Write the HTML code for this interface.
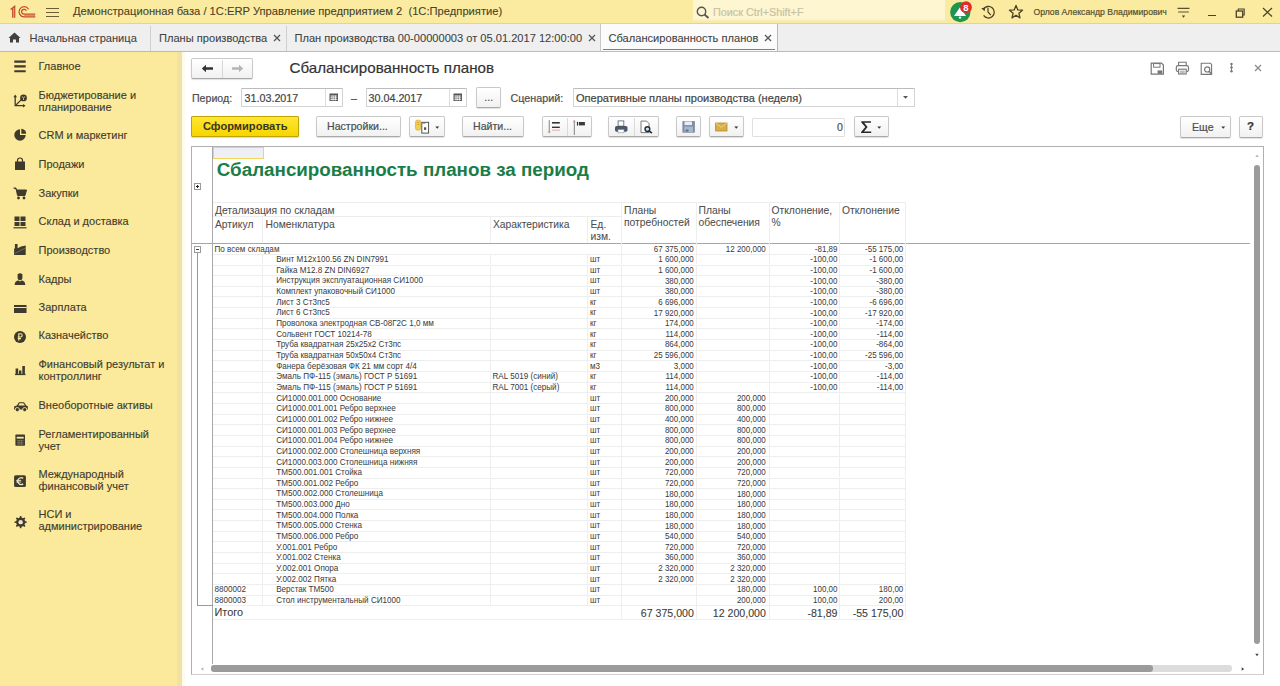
<!DOCTYPE html><html><head><meta charset="utf-8"><style>
html,body{margin:0;padding:0;width:1280px;height:686px;overflow:hidden;background:#fff;font-family:"Liberation Sans", sans-serif;}
.t{position:absolute;white-space:nowrap;-webkit-text-stroke-width:0.2px;}
.b{position:absolute;box-sizing:border-box;}
</style></head><body>
<div class="b" style="left:0.00px;top:0.00px;width:1280.00px;height:23.50px;background:#fbeba0"></div>
<div class="b" style="left:0.00px;top:23.00px;width:1280.00px;height:1.00px;background:#e2d491"></div>
<svg class="b" style="left:9.00px;top:4.00px;" width="28" height="16" viewBox="0 0 28 16">
<g fill="none" stroke="#c44a2a" stroke-width="1.25">
<path d="M1.6 5.6 L5.7 2.4 L5.7 13.7"/>
<path d="M3.7 4.3 L3.7 13.7"/>
<path d="M19.6 5.2 A5.1 5.1 0 1 0 15.2 12.9 L26.3 12.9"/>
<path d="M17.4 6.9 A2.45 2.45 0 1 0 15.2 10.2 L26.3 10.2"/>
</g>
<path d="M15.2 11.5 L26 11.5" stroke="#e8856a" stroke-width="1.1"/>
<path d="M4.7 4 L4.7 13.5" stroke="#e8856a" stroke-width="0.9"/></svg>
<div class="b" style="left:46.00px;top:7.60px;width:12.50px;height:1.20px;background:#6a5e36"></div>
<div class="b" style="left:46.00px;top:11.70px;width:12.50px;height:1.20px;background:#6a5e36"></div>
<div class="b" style="left:46.00px;top:16.00px;width:12.50px;height:1.20px;background:#6a5e36"></div>
<div class="t" style="left:73.00px;top:5.40px;font-size:11.2px;line-height:13.44px;color:#4a4226;font-weight:normal;-webkit-text-stroke-width:0.1px">Демонстрационная база / 1С:ERP Управление предприятием 2  (1С:Предприятие)</div>
<div class="b" style="left:693.00px;top:0.00px;width:252.00px;height:22.00px;background:linear-gradient(#fdf6d0 85%,#f6e8a8)"></div>
<svg class="b" style="left:696.00px;top:6.00px;" width="14" height="13" viewBox="0 0 14 13"><circle cx="5.5" cy="5.5" r="4.2" fill="none" stroke="#555" stroke-width="1.4"/><path d="M8.5 8.5 L12.5 12" stroke="#555" stroke-width="1.8"/></svg>
<div class="t" style="left:713.00px;top:5.78px;font-size:10.8px;line-height:12.96px;color:#c9c2a5;font-weight:normal;">Поиск Ctrl+Shift+F</div>
<svg class="b" style="left:948.00px;top:0.00px;" width="26" height="24" viewBox="0 0 26 24"><circle cx="12.3" cy="12.1" r="10.2" fill="#1e9550"/>
<path d="M6 16.1 L18 16.1 L12 7.2 Z" fill="#fff"/>
<circle cx="12" cy="17.6" r="1.2" fill="#fff"/>
<circle cx="18" cy="7.2" r="5.9" fill="#e32b2b"/>
<text x="18" y="10.5" font-family="Liberation Sans" font-size="9.5" font-weight="bold" fill="#fff" text-anchor="middle">8</text></svg>
<svg class="b" style="left:980.00px;top:4.00px;" width="16" height="16" viewBox="0 0 16 16"><path d="M3.5 5.2 A5.8 5.8 0 1 1 3.6 11.4" fill="none" stroke="#4a4226" stroke-width="1.3"/>
<path d="M1.2 4.2 L5.2 3.6 L4.6 7.2Z" fill="#4a4226"/>
<path d="M8 3.8 L8 8 L10.8 11.2" fill="none" stroke="#4a4226" stroke-width="1.2"/></svg>
<svg class="b" style="left:1008.00px;top:4.00px;" width="16" height="16" viewBox="0 0 16 16"><path d="M8 1.4 L9.8 5.9 L14.5 6.2 L10.9 9.3 L12 13.9 L8 11.3 L4 13.9 L5.1 9.3 L1.5 6.2 L6.2 5.9 Z" fill="none" stroke="#4a4226" stroke-width="1.3" stroke-linejoin="round"/></svg>
<div class="t" style="left:1033.50px;top:7.11px;font-size:8.65px;line-height:10.38px;color:#57502f;font-weight:normal;">Орлов Александр Владимирович</div>
<svg class="b" style="left:1175.00px;top:4.00px;" width="16" height="16" viewBox="0 0 16 16"><path d="M2.5 4.4 H14.5 M3.2 8 H13.8" stroke="#5a5030" stroke-width="1.1"/><path d="M6.8 11.6 L10.2 11.6 L8.5 13.8Z" fill="#4a4226"/></svg>
<div class="b" style="left:1208.00px;top:14.80px;width:7.80px;height:1.20px;background:#4a4226"></div>
<svg class="b" style="left:1234.00px;top:7.00px;" width="12" height="12" viewBox="0 0 12 12"><rect x="2.3" y="4" width="6.4" height="6.2" fill="none" stroke="#4a4226" stroke-width="1.3"/><path d="M4.3 4 V2 H10.2 V8 H8.7" fill="none" stroke="#4a4226" stroke-width="1.1"/></svg>
<svg class="b" style="left:1261.00px;top:6.00px;" width="13" height="13" viewBox="0 0 13 13"><path d="M2 2 L11 10.5 M11 2 L2 10.5" stroke="#4a4226" stroke-width="1.2"/></svg>
<div class="b" style="left:0.00px;top:23.50px;width:1280.00px;height:28.00px;background:#efefef"></div>
<div class="b" style="left:0.00px;top:51.00px;width:1280.00px;height:1.00px;background:#bbbbbb"></div>
<svg class="b" style="left:8.00px;top:32.00px;" width="13" height="11" viewBox="0 0 13 11"><path d="M6.5 0.5 L12.5 6 L11 6 L11 10.5 L8 10.5 L8 7.5 L5 7.5 L5 10.5 L2 10.5 L2 6 L0.5 6 Z" fill="#404040"/></svg>
<div class="t" style="left:29.50px;top:31.79px;font-size:11.1px;line-height:13.32px;color:#404040;font-weight:normal;-webkit-text-stroke-width:0.08px">Начальная страница</div>
<div class="b" style="left:150.00px;top:26.00px;width:1.00px;height:25.00px;background:#cfcfcf"></div>
<div class="t" style="left:159.00px;top:31.79px;font-size:11.1px;line-height:13.32px;color:#404040;font-weight:normal;-webkit-text-stroke-width:0.08px">Планы производства</div>
<svg class="b" style="left:273.00px;top:34.00px;" width="8" height="8" viewBox="0 0 8 8"><path d="M1 1 L7 7 M7 1 L1 7" stroke="#555" stroke-width="1.3"/></svg>
<div class="b" style="left:285.50px;top:26.00px;width:1.00px;height:25.00px;background:#cfcfcf"></div>
<div class="t" style="left:294.50px;top:31.79px;font-size:11.1px;line-height:13.32px;color:#404040;font-weight:normal;-webkit-text-stroke-width:0.08px">План производства 00-00000003 от 05.01.2017 12:00:00</div>
<svg class="b" style="left:588.00px;top:34.00px;" width="8" height="8" viewBox="0 0 8 8"><path d="M1 1 L7 7 M7 1 L1 7" stroke="#555" stroke-width="1.3"/></svg>
<div class="b" style="left:600.00px;top:24.00px;width:178.00px;height:27.00px;background:#fbfbfb;border-left:1px solid #c8c8c8;border-right:1px solid #b8b8b8"></div>
<div class="t" style="left:608.50px;top:31.79px;font-size:11.1px;line-height:13.32px;color:#404040;font-weight:normal;-webkit-text-stroke-width:0.08px">Сбалансированность планов</div>
<svg class="b" style="left:764.00px;top:34.00px;" width="8" height="8" viewBox="0 0 8 8"><path d="M1 1 L7 7 M7 1 L1 7" stroke="#555" stroke-width="1.3"/></svg>
<div class="b" style="left:603.00px;top:48.50px;width:172.00px;height:1.60px;background:#3f9e7c"></div>
<div class="b" style="left:0.00px;top:52.00px;width:181.00px;height:634.00px;background:#fbe99c"></div>
<div class="b" style="left:176.80px;top:52.00px;width:3.20px;height:634.00px;background:#f5e297"></div>
<div class="b" style="left:180.00px;top:52.00px;width:2.00px;height:634.00px;background:#e8e2b8"></div>
<div class="b" style="left:182.00px;top:52.00px;width:3.00px;height:634.00px;background:#fffbe8"></div>
<div class="t" style="left:38.50px;top:60.19px;font-size:11.0px;line-height:13.20px;color:#3f3b2c;font-weight:normal;-webkit-text-stroke-width:0.12px">Главное</div>
<div class="t" style="left:38.50px;top:88.59px;font-size:11.0px;line-height:13.20px;color:#3f3b2c;font-weight:normal;-webkit-text-stroke-width:0.12px">Бюджетирование и</div>
<div class="t" style="left:38.50px;top:100.79px;font-size:11.0px;line-height:13.20px;color:#3f3b2c;font-weight:normal;-webkit-text-stroke-width:0.12px">планирование</div>
<div class="t" style="left:38.50px;top:128.89px;font-size:11.0px;line-height:13.20px;color:#3f3b2c;font-weight:normal;-webkit-text-stroke-width:0.12px">CRM и маркетинг</div>
<div class="t" style="left:38.50px;top:158.09px;font-size:11.0px;line-height:13.20px;color:#3f3b2c;font-weight:normal;-webkit-text-stroke-width:0.12px">Продажи</div>
<div class="t" style="left:38.50px;top:186.69px;font-size:11.0px;line-height:13.20px;color:#3f3b2c;font-weight:normal;-webkit-text-stroke-width:0.12px">Закупки</div>
<div class="t" style="left:38.50px;top:215.49px;font-size:11.0px;line-height:13.20px;color:#3f3b2c;font-weight:normal;-webkit-text-stroke-width:0.12px">Склад и доставка</div>
<div class="t" style="left:38.50px;top:244.09px;font-size:11.0px;line-height:13.20px;color:#3f3b2c;font-weight:normal;-webkit-text-stroke-width:0.12px">Производство</div>
<div class="t" style="left:38.50px;top:272.99px;font-size:11.0px;line-height:13.20px;color:#3f3b2c;font-weight:normal;-webkit-text-stroke-width:0.12px">Кадры</div>
<div class="t" style="left:38.50px;top:300.99px;font-size:11.0px;line-height:13.20px;color:#3f3b2c;font-weight:normal;-webkit-text-stroke-width:0.12px">Зарплата</div>
<div class="t" style="left:38.50px;top:329.39px;font-size:11.0px;line-height:13.20px;color:#3f3b2c;font-weight:normal;-webkit-text-stroke-width:0.12px">Казначейство</div>
<div class="t" style="left:38.50px;top:358.19px;font-size:11.0px;line-height:13.20px;color:#3f3b2c;font-weight:normal;-webkit-text-stroke-width:0.12px">Финансовый результат и</div>
<div class="t" style="left:38.50px;top:370.39px;font-size:11.0px;line-height:13.20px;color:#3f3b2c;font-weight:normal;-webkit-text-stroke-width:0.12px">контроллинг</div>
<div class="t" style="left:38.50px;top:399.19px;font-size:11.0px;line-height:13.20px;color:#3f3b2c;font-weight:normal;-webkit-text-stroke-width:0.12px">Внеоборотные активы</div>
<div class="t" style="left:38.50px;top:427.69px;font-size:11.0px;line-height:13.20px;color:#3f3b2c;font-weight:normal;-webkit-text-stroke-width:0.12px">Регламентированный</div>
<div class="t" style="left:38.50px;top:439.89px;font-size:11.0px;line-height:13.20px;color:#3f3b2c;font-weight:normal;-webkit-text-stroke-width:0.12px">учет</div>
<div class="t" style="left:38.50px;top:468.19px;font-size:11.0px;line-height:13.20px;color:#3f3b2c;font-weight:normal;-webkit-text-stroke-width:0.12px">Международный</div>
<div class="t" style="left:38.50px;top:480.39px;font-size:11.0px;line-height:13.20px;color:#3f3b2c;font-weight:normal;-webkit-text-stroke-width:0.12px">финансовый учет</div>
<div class="t" style="left:38.50px;top:508.19px;font-size:11.0px;line-height:13.20px;color:#3f3b2c;font-weight:normal;-webkit-text-stroke-width:0.12px">НСИ и</div>
<div class="t" style="left:38.50px;top:520.39px;font-size:11.0px;line-height:13.20px;color:#3f3b2c;font-weight:normal;-webkit-text-stroke-width:0.12px">администрирование</div>
<svg class="b" style="left:12.00px;top:58.00px;" width="16" height="16" viewBox="0 0 16 16"><path d="M2.3 3.6 H13.7 M2.3 8.4 H13.7 M2.3 13.2 H13.7" stroke="#3e3a2c" stroke-width="2.1"/></svg>
<svg class="b" style="left:12.00px;top:93.00px;" width="16" height="16" viewBox="0 0 16 16"><path d="M3.2 3 V12.7 H11.5" fill="none" stroke="#3e3a2c" stroke-width="1.3"/><path d="M1.4 4.3 L3.2 1.6 L5 4.3Z" fill="#3e3a2c"/><path d="M11 10.9 L13.6 12.7 L11 14.5Z" fill="#3e3a2c"/><path d="M4 12 L9.3 6.6" stroke="#3e3a2c" stroke-width="1.2"/><circle cx="11.5" cy="4.9" r="3.4" fill="#3e3a2c"/><path d="M10.2 3.3 L11.5 5.5 L12.8 3.3 M11.5 5.5 V7" fill="none" stroke="#fbe99c" stroke-width="0.7"/></svg>
<svg class="b" style="left:13.00px;top:128.20px;" width="14" height="14" viewBox="0 0 14 14"><path d="M7 1.3 A5.7 5.7 0 1 0 12.7 7 L7 7 Z" fill="#3e3a2c"/><path d="M8.3 0.8 A5 5 0 0 1 13.2 5.7 L8.3 5.7Z" fill="#3e3a2c"/></svg>
<svg class="b" style="left:13.00px;top:157.40px;" width="14" height="14" viewBox="0 0 14 14"><path d="M2 4.5 H12 V13 H2Z" fill="#3e3a2c"/><path d="M4.5 6 V3.5 A2.5 2.5 0 0 1 9.5 3.5 V6" fill="none" stroke="#3e3a2c" stroke-width="1.2"/></svg>
<svg class="b" style="left:13.00px;top:186.00px;" width="14" height="14" viewBox="0 0 14 14"><path d="M0.5 2 H3 L4.5 9.5 H12 L13.5 4 H3.5" fill="#3e3a2c" stroke="#3e3a2c" stroke-width="1"/><circle cx="5.5" cy="12" r="1.4" fill="#3e3a2c"/><circle cx="11" cy="12" r="1.4" fill="#3e3a2c"/></svg>
<svg class="b" style="left:13.00px;top:214.80px;" width="14" height="14" viewBox="0 0 14 14"><path d="M1.5 1.5 H6.5 V6 H1.5Z M7.5 1.5 H12.5 V6 H7.5Z M1.5 7 H6.5 V11 H1.5Z M7.5 7 H12.5 V11 H7.5Z" fill="#3e3a2c"/><path d="M0.5 12.8 H13.5" stroke="#3e3a2c" stroke-width="1.2"/></svg>
<svg class="b" style="left:13.00px;top:243.40px;" width="14" height="14" viewBox="0 0 14 14"><path d="M1.1 12.1 V5.6 H1.9 V0.9 H4.6 V5.2 L8 3.6 L12.7 2.4 V12.1Z" fill="#3e3a2c"/><path d="M2 10.5 L12 5.2" stroke="#7d7760" stroke-width="0.8"/></svg>
<svg class="b" style="left:13.00px;top:272.30px;" width="14" height="14" viewBox="0 0 14 14"><path d="M4.6 2.2 Q7 0.3 9.4 2.2 V5.6 A2.4 2.6 0 0 1 4.6 5.6Z" fill="#3e3a2c"/><path d="M1.7 13 C1.7 9.6 3.6 8.6 5.4 8.4 L7 9.6 L8.6 8.4 C10.4 8.6 12.3 9.6 12.3 13Z" fill="#3e3a2c"/></svg>
<svg class="b" style="left:13.00px;top:301.80px;" width="14" height="14" viewBox="0 0 14 14"><rect x="1" y="3" width="12.5" height="8" fill="#3e3a2c"/><path d="M1 5.5 H13.5" stroke="#fbe99c" stroke-width="1"/></svg>
<svg class="b" style="left:13.00px;top:330.20px;" width="14" height="14" viewBox="0 0 14 14"><circle cx="7" cy="7" r="6" fill="#3e3a2c"/><path d="M5.8 10.5 V3.8 H7.6 A1.6 1.6 0 0 1 7.6 7 H4.8 M4.8 8.6 H8" fill="none" stroke="#fbe99c" stroke-width="1.1"/></svg>
<svg class="b" style="left:13.00px;top:361.50px;" width="14" height="14" viewBox="0 0 14 14"><path d="M2 12.5 H12.5" stroke="#3e3a2c" stroke-width="1.2"/><rect x="2.6" y="6.5" width="2.6" height="6" fill="#3e3a2c"/><rect x="6" y="8.5" width="2.4" height="4" fill="#3e3a2c"/><rect x="9.3" y="4" width="2.6" height="8.5" fill="#3e3a2c"/></svg>
<svg class="b" style="left:13.00px;top:399.00px;" width="16" height="14" viewBox="0 0 16 14"><path d="M1 10.5 L1.3 7.3 L3.8 6.6 L6 3.2 L11 3.2 L13.2 6.6 L14.8 7.3 L14.8 10.5Z" fill="#3e3a2c"/><path d="M6.6 4.3 L10.4 4.3 L11.9 6.5 L5.3 6.5Z" fill="#fbe99c"/><circle cx="4.3" cy="10.6" r="2.1" fill="#3e3a2c" stroke="#fbe99c" stroke-width="0.9"/><circle cx="11.7" cy="10.6" r="2.1" fill="#3e3a2c" stroke="#fbe99c" stroke-width="0.9"/></svg>
<svg class="b" style="left:13.00px;top:432.00px;" width="16" height="16" viewBox="0 0 16 16"><rect x="2.4" y="2.4" width="9.6" height="11.3" rx="0.8" fill="#3e3a2c"/><rect x="3.7" y="4.8" width="7" height="1.8" fill="#fbe99c"/><path d="M4 8.6 H10.6 M4 10.3 H10.6 M4 12 H10.6" stroke="#8a8570" stroke-width="0.6"/><path d="M6 8 V13 M8.5 8 V13" stroke="#8a8570" stroke-width="0.6"/></svg>
<svg class="b" style="left:13.00px;top:474.00px;" width="16" height="16" viewBox="0 0 16 16"><rect x="1.1" y="1.3" width="11.8" height="11.7" rx="1.5" fill="#3e3a2c"/><path d="M10.2 4.4 A3.4 3.4 0 1 0 10.2 9.9" fill="none" stroke="#ede6c8" stroke-width="1.3"/><path d="M3.2 6.4 H8.2 M3.2 8 H8.2" stroke="#ede6c8" stroke-width="0.9"/></svg>
<svg class="b" style="left:13.00px;top:513.50px;" width="15" height="16" viewBox="0 0 15 16"><path d="M7 2 L8.3 2 L8.6 3.6 L10.1 4.3 L11.5 3.4 L12.4 4.3 L11.5 5.7 L12.2 7.2 L13.8 7.5 L13.8 8.8 L12.2 9.1 L11.5 10.6 L12.4 12 L11.5 12.9 L10.1 12 L8.6 12.7 L8.3 14.3 L7 14.3 L6.7 12.7 L5.2 12 L3.8 12.9 L2.9 12 L3.8 10.6 L3.1 9.1 L1.5 8.8 L1.5 7.5 L3.1 7.2 L3.8 5.7 L2.9 4.3 L3.8 3.4 L5.2 4.3 L6.7 3.6Z" fill="#3e3a2c"/><circle cx="7.65" cy="8.15" r="2.2" fill="#ede6c8"/></svg>
<div class="b" style="left:191.00px;top:57.80px;width:61.50px;height:20.80px;background:linear-gradient(#ffffff,#f1f1f1);border:1px solid #c9c9c9;border-bottom-color:#a9a9a9;border-radius:2px;box-shadow:0 1px 1px rgba(0,0,0,0.12)"></div>
<div class="b" style="left:222.00px;top:59.50px;width:1.00px;height:18.00px;background:#d8d8d8"></div>
<svg class="b" style="left:201.00px;top:64.00px;" width="13" height="9" viewBox="0 0 13 9"><path d="M0.8 4.5 L5 0.8 L5 3.3 L12 3.3 L12 5.7 L5 5.7 L5 8.2Z" fill="#333"/></svg>
<svg class="b" style="left:231.00px;top:64.00px;" width="13" height="9" viewBox="0 0 13 9"><path d="M12.2 4.5 L8 0.8 L8 3.3 L1 3.3 L1 5.7 L8 5.7 L8 8.2Z" fill="#b5b5b5"/></svg>
<div class="t" style="left:289.50px;top:59.46px;font-size:15.15px;line-height:18.18px;color:#333;font-weight:normal;">Сбалансированность планов</div>
<svg class="b" style="left:1150.00px;top:62.00px;" width="15" height="14" viewBox="0 0 15 14"><path d="M1.2 1.2 H11.5 L13.4 3.1 V12.2 H1.2Z" fill="none" stroke="#777" stroke-width="1.2"/><rect x="3.6" y="1.6" width="6.4" height="3.6" fill="none" stroke="#777" stroke-width="1"/><rect x="7.6" y="8.4" width="4.6" height="3.4" fill="#777"/></svg>
<svg class="b" style="left:1175.00px;top:61.00px;" width="15" height="15" viewBox="0 0 15 15"><rect x="1.3" y="4.6" width="12.2" height="6" rx="1.8" fill="none" stroke="#777" stroke-width="1.2"/><path d="M3.6 4.6 V1.3 H11.2 V4.6" fill="none" stroke="#777" stroke-width="1.1"/><rect x="3.6" y="8.2" width="7.6" height="4.8" fill="#fff" stroke="#777" stroke-width="1.1"/><path d="M5 10.2 H9.8 M5 11.8 H9.8" stroke="#777" stroke-width="0.7"/></svg>
<svg class="b" style="left:1200.00px;top:61.50px;" width="14" height="14" viewBox="0 0 14 14"><path d="M1.2 1.2 H10.4 L11.6 2.4 V12.4 H1.2Z" fill="none" stroke="#777" stroke-width="1.1"/><circle cx="7.2" cy="7.4" r="2.6" fill="none" stroke="#777" stroke-width="1.2"/><path d="M9 9.3 L11.8 12.3" stroke="#777" stroke-width="1.5"/></svg>
<svg class="b" style="left:1229.00px;top:62.00px;" width="5" height="11" viewBox="0 0 5 11"><path d="M2.5 1.5 V9.6" stroke="#777" stroke-width="0.9"/><circle cx="2.5" cy="1.9" r="1.2" fill="#777"/><circle cx="2.5" cy="5.5" r="1.2" fill="#777"/><circle cx="2.5" cy="9.2" r="1.2" fill="#777"/></svg>
<svg class="b" style="left:1253.50px;top:63.50px;" width="8" height="8" viewBox="0 0 8 8"><path d="M1 1 L7 7 M7 1 L1 7" stroke="#888" stroke-width="1.2"/></svg>
<div class="t" style="left:192.00px;top:91.97px;font-size:10.6px;line-height:12.72px;color:#4d4d4d;font-weight:normal;">Период:</div>
<div class="b" style="left:241.25px;top:88.30px;width:101.50px;height:18.50px;background:#fff;border:1px solid #d2d2d2;border-top-color:#bcbcbc;border-radius:1px"></div>
<div class="b" style="left:325.00px;top:89.30px;width:1.00px;height:16.50px;background:#dcdcdc"></div>
<div class="t" style="left:244.50px;top:91.83px;font-size:10.75px;line-height:12.90px;color:#444;font-weight:normal;">31.03.2017</div>
<svg class="b" style="left:328.50px;top:93.00px;" width="10" height="9" viewBox="0 0 10 9"><rect x="0.5" y="0.5" width="8.5" height="7.5" fill="#555"/><path d="M1.3 3 H8.2 M1.3 4.8 H8.2 M1.3 6.5 H8.2 M3 2.5 V7.5 M4.75 2.5 V7.5 M6.5 2.5 V7.5" stroke="#fff" stroke-width="0.7"/></svg>
<div class="t" style="left:351.00px;top:91.97px;font-size:10.6px;line-height:12.72px;color:#4d4d4d;font-weight:normal;">–</div>
<div class="b" style="left:366.40px;top:88.30px;width:100.30px;height:18.50px;background:#fff;border:1px solid #d2d2d2;border-top-color:#bcbcbc;border-radius:1px"></div>
<div class="b" style="left:449.40px;top:89.30px;width:1.00px;height:16.50px;background:#dcdcdc"></div>
<div class="t" style="left:368.50px;top:91.83px;font-size:10.75px;line-height:12.90px;color:#444;font-weight:normal;">30.04.2017</div>
<svg class="b" style="left:452.50px;top:93.00px;" width="10" height="9" viewBox="0 0 10 9"><rect x="0.5" y="0.5" width="8.5" height="7.5" fill="#555"/><path d="M1.3 3 H8.2 M1.3 4.8 H8.2 M1.3 6.5 H8.2 M3 2.5 V7.5 M4.75 2.5 V7.5 M6.5 2.5 V7.5" stroke="#fff" stroke-width="0.7"/></svg>
<div class="b" style="left:476.40px;top:86.50px;width:24.60px;height:21.00px;background:linear-gradient(#ffffff,#f1f1f1);border:1px solid #c9c9c9;border-bottom-color:#a9a9a9;border-radius:2px;box-shadow:0 1px 1px rgba(0,0,0,0.12)"></div>
<div class="t" style="left:484.30px;top:91.27px;font-size:10.6px;line-height:12.72px;color:#555;font-weight:normal;">...</div>
<div class="t" style="left:510.50px;top:91.83px;font-size:10.75px;line-height:12.90px;color:#4d4d4d;font-weight:normal;">Сценарий:</div>
<div class="b" style="left:573.10px;top:88.30px;width:341.80px;height:18.50px;background:#fff;border:1px solid #d2d2d2;border-top-color:#bcbcbc;border-radius:1px"></div>
<div class="b" style="left:896.50px;top:89.30px;width:1.00px;height:16.50px;background:#dcdcdc"></div>
<div class="t" style="left:576.00px;top:91.54px;font-size:11.05px;line-height:13.26px;color:#444;font-weight:normal;">Оперативные планы производства (неделя)</div>
<svg class="b" style="left:902.00px;top:95.00px;" width="7" height="5" viewBox="0 0 7 5"><path d="M1 1 L6 1 L3.5 3.8Z" fill="#555"/></svg>
<div class="b" style="left:191.25px;top:116.40px;width:107.50px;height:20.70px;background:linear-gradient(#ffe733,#f6d500);border:1px solid #bfa300;border-radius:1px;box-shadow:0 1px 1px rgba(0,0,0,0.15)"></div>
<div class="t" style="left:203.00px;top:119.99px;font-size:11.1px;line-height:13.32px;color:#3a3520;font-weight:bold;-webkit-text-stroke-width:0">Сформировать</div>
<div class="b" style="left:316.00px;top:116.10px;width:85.20px;height:21.20px;background:linear-gradient(#ffffff,#f1f1f1);border:1px solid #c9c9c9;border-bottom-color:#a9a9a9;border-radius:2px;box-shadow:0 1px 1px rgba(0,0,0,0.12)"></div>
<div class="t" style="left:327.00px;top:120.47px;font-size:10.6px;line-height:12.72px;color:#4d4d4d;font-weight:normal;">Настройки...</div>
<div class="b" style="left:409.30px;top:116.10px;width:35.50px;height:21.20px;background:linear-gradient(#ffffff,#f1f1f1);border:1px solid #c9c9c9;border-bottom-color:#a9a9a9;border-radius:2px;box-shadow:0 1px 1px rgba(0,0,0,0.12)"></div>
<svg class="b" style="left:413.00px;top:118.00px;" width="20" height="18" viewBox="0 0 20 18"><rect x="2.6" y="2.2" width="5" height="9.8" rx="1.5" fill="#f0cf55" stroke="#dcb032" stroke-width="0.8"/><path d="M4 4.5 H6.2 M4 6.5 H6.2" stroke="#c99a20" stroke-width="0.7"/><rect x="8.8" y="4.3" width="6.8" height="10.8" fill="#fff" stroke="#444" stroke-width="0.9"/><path d="M9.3 5.5 H12.5" stroke="#888" stroke-width="0.7"/><rect x="11" y="9.3" width="2.2" height="2.6" fill="#555"/></svg>
<svg class="b" style="left:434.50px;top:125.50px;" width="5" height="4" viewBox="0 0 5 4"><path d="M0.3 0.5 L4.2 0.5 L2.25 2.8Z" fill="#333"/></svg>
<div class="b" style="left:461.70px;top:116.10px;width:62.20px;height:21.20px;background:linear-gradient(#ffffff,#f1f1f1);border:1px solid #c9c9c9;border-bottom-color:#a9a9a9;border-radius:2px;box-shadow:0 1px 1px rgba(0,0,0,0.12)"></div>
<div class="t" style="left:473.00px;top:120.47px;font-size:10.6px;line-height:12.72px;color:#4d4d4d;font-weight:normal;">Найти...</div>
<div class="b" style="left:541.50px;top:116.10px;width:50.00px;height:21.20px;background:linear-gradient(#ffffff,#f1f1f1);border:1px solid #c9c9c9;border-bottom-color:#a9a9a9;border-radius:2px;box-shadow:0 1px 1px rgba(0,0,0,0.12)"></div>
<div class="b" style="left:567.30px;top:117.50px;width:1.00px;height:18.50px;background:#dadada"></div>
<svg class="b" style="left:546.00px;top:118.00px;" width="20" height="18" viewBox="0 0 20 18"><path d="M3.25 2.2 V15" stroke="#777" stroke-width="0.9"/><path d="M2 13 L3.25 15.2 L4.5 13" fill="none" stroke="#d99" stroke-width="0.7"/><rect x="6" y="4" width="7.8" height="1.6" fill="#333"/><rect x="6" y="8.6" width="7.8" height="1.4" fill="#333"/><rect x="6" y="11.7" width="7.8" height="0.9" fill="#e6a0a0"/></svg>
<svg class="b" style="left:571.00px;top:118.00px;" width="20" height="18" viewBox="0 0 20 18"><path d="M3.3 2.2 V17" stroke="#777" stroke-width="0.9"/><path d="M2 4.4 L3.3 2.2 L4.6 4.4" fill="none" stroke="#d99" stroke-width="0.7"/><rect x="5.9" y="3.8" width="1.2" height="3.8" fill="#333"/><rect x="7.9" y="4" width="6" height="3.4" fill="#3a3a3a"/></svg>
<div class="b" style="left:608.40px;top:116.10px;width:50.60px;height:21.20px;background:linear-gradient(#ffffff,#f1f1f1);border:1px solid #c9c9c9;border-bottom-color:#a9a9a9;border-radius:2px;box-shadow:0 1px 1px rgba(0,0,0,0.12)"></div>
<div class="b" style="left:634.30px;top:117.50px;width:1.00px;height:18.50px;background:#dadada"></div>
<svg class="b" style="left:613.00px;top:118.00px;" width="16" height="18" viewBox="0 0 16 18"><rect x="5.1" y="2.9" width="5.7" height="5.2" fill="#fff" stroke="#5f6f88" stroke-width="0.9"/><rect x="2" y="8" width="12.5" height="5.7" rx="1.6" fill="#4b5668"/><rect x="5" y="11.6" width="6" height="3.2" fill="#fff" stroke="#8a93a0" stroke-width="0.6"/></svg>
<svg class="b" style="left:639.00px;top:118.00px;" width="16" height="18" viewBox="0 0 16 18"><path d="M2 3.1 H7.6 L10 5.5 V14.6 H2Z" fill="#fff" stroke="#6a6a6a" stroke-width="0.9"/><circle cx="8.4" cy="11.1" r="2.4" fill="#cfe0ef" stroke="#1f2a3a" stroke-width="1.4"/><path d="M10.1 12.8 L12.9 15.1" stroke="#1f2a3a" stroke-width="1.7"/></svg>
<div class="b" style="left:676.30px;top:116.10px;width:24.70px;height:21.20px;background:linear-gradient(#ffffff,#f1f1f1);border:1px solid #c9c9c9;border-bottom-color:#a9a9a9;border-radius:2px;box-shadow:0 1px 1px rgba(0,0,0,0.12)"></div>
<svg class="b" style="left:681.00px;top:118.00px;" width="16" height="16" viewBox="0 0 16 16"><rect x="1.4" y="2.9" width="12.5" height="11.9" rx="0.8" fill="#7d8ea4"/><rect x="3.5" y="3.5" width="7.5" height="3.6" fill="#e6edf4"/><rect x="3.3" y="8.6" width="8.6" height="5.6" fill="#a9b8c9"/><rect x="4.5" y="11.6" width="3" height="2" fill="#5d6d82"/></svg>
<div class="b" style="left:709.10px;top:116.10px;width:34.80px;height:21.20px;background:linear-gradient(#ffffff,#f1f1f1);border:1px solid #c9c9c9;border-bottom-color:#a9a9a9;border-radius:2px;box-shadow:0 1px 1px rgba(0,0,0,0.12)"></div>
<svg class="b" style="left:713.00px;top:120.00px;" width="16" height="14" viewBox="0 0 16 14"><rect x="2.6" y="3" width="11.4" height="8" fill="#d8ae48" stroke="#b88a2a" stroke-width="0.8"/><path d="M2.8 3.2 L8.3 7.3 L13.8 3.2" fill="none" stroke="#f4d98a" stroke-width="0.9"/></svg>
<svg class="b" style="left:733.50px;top:125.50px;" width="5" height="4" viewBox="0 0 5 4"><path d="M0.3 0.5 L4.2 0.5 L2.25 2.8Z" fill="#333"/></svg>
<div class="b" style="left:752.30px;top:117.50px;width:92.40px;height:19.00px;background:#fff;border:1px solid #e0e0e0;border-radius:1px"></div>
<div class="t" style="right:437.00px;top:120.97px;font-size:10.6px;line-height:12.72px;color:#4d4d4d;font-weight:normal;text-align:right;">0</div>
<div class="b" style="left:854.40px;top:116.10px;width:34.20px;height:21.20px;background:linear-gradient(#ffffff,#f1f1f1);border:1px solid #c9c9c9;border-bottom-color:#a9a9a9;border-radius:2px;box-shadow:0 1px 1px rgba(0,0,0,0.12)"></div>
<svg class="b" style="left:859.00px;top:119.00px;" width="14" height="16" viewBox="0 0 14 16"><path d="M2.3 2.2 H12 V3.8 H5.2 L8.6 8.1 L5 12.4 H12.2 V14.1 H2.1 V12.9 L6.3 8.1 L2.3 3.4Z" fill="#2a2a2a"/></svg>
<svg class="b" style="left:877.00px;top:125.50px;" width="5" height="4" viewBox="0 0 5 4"><path d="M0.3 0.5 L4.2 0.5 L2.25 2.8Z" fill="#333"/></svg>
<div class="b" style="left:1180.40px;top:116.00px;width:50.30px;height:21.60px;background:linear-gradient(#ffffff,#f1f1f1);border:1px solid #c9c9c9;border-bottom-color:#a9a9a9;border-radius:2px;box-shadow:0 1px 1px rgba(0,0,0,0.12)"></div>
<div class="t" style="left:1192.00px;top:120.97px;font-size:10.6px;line-height:12.72px;color:#4d4d4d;font-weight:normal;">Еще</div>
<svg class="b" style="left:1220.50px;top:125.50px;" width="5" height="4" viewBox="0 0 5 4"><path d="M0.3 0.5 L4.2 0.5 L2.25 2.8Z" fill="#333"/></svg>
<div class="b" style="left:1238.60px;top:116.00px;width:24.70px;height:21.60px;background:linear-gradient(#ffffff,#f1f1f1);border:1px solid #c9c9c9;border-bottom-color:#a9a9a9;border-radius:2px;box-shadow:0 1px 1px rgba(0,0,0,0.12)"></div>
<div class="t" style="left:1247.00px;top:120.12px;font-size:11.5px;line-height:13.80px;color:#333;font-weight:bold;">?</div>
<div class="b" style="left:191.00px;top:146.00px;width:1073.00px;height:529.00px;border:1px solid #b0b0b0;border-bottom-color:#cfcfcf;background:#fff"></div>
<div class="b" style="left:212.30px;top:146.00px;width:1.00px;height:517.50px;background:#a8a8a8"></div>
<div class="b" style="left:212.50px;top:146.50px;width:51.80px;height:12.50px;border:1.7px solid #f2d65c;background:#eef0f5"></div>
<div class="b" style="left:194.00px;top:183.00px;width:7.00px;height:7.00px;border:1px solid #9a9a9a;background:#fff"></div>
<div class="b" style="left:196.00px;top:186.00px;width:3.00px;height:1.00px;background:#222"></div>
<div class="b" style="left:197.00px;top:185.00px;width:1.00px;height:3.00px;background:#222"></div>
<div class="t" style="left:216.80px;top:158.81px;font-size:18.8px;line-height:22.56px;color:#1a7d48;font-weight:bold;-webkit-text-stroke-width:0">Сбалансированность планов за период</div>
<div class="b" style="left:212.50px;top:202.00px;width:692.30px;height:1.00px;background:#ededed"></div>
<div class="b" style="left:212.50px;top:216.40px;width:408.30px;height:1.00px;background:#ededed"></div>
<div class="b" style="left:262.00px;top:216.40px;width:1.00px;height:27.10px;background:#eeeeee"></div>
<div class="b" style="left:490.00px;top:216.40px;width:1.00px;height:27.10px;background:#eeeeee"></div>
<div class="b" style="left:587.00px;top:216.40px;width:1.00px;height:27.10px;background:#eeeeee"></div>
<div class="b" style="left:620.50px;top:202.00px;width:1.00px;height:41.50px;background:#eeeeee"></div>
<div class="b" style="left:695.50px;top:202.00px;width:1.00px;height:41.50px;background:#eeeeee"></div>
<div class="b" style="left:768.50px;top:202.00px;width:1.00px;height:41.50px;background:#eeeeee"></div>
<div class="b" style="left:839.00px;top:202.00px;width:1.00px;height:41.50px;background:#eeeeee"></div>
<div class="b" style="left:904.50px;top:202.00px;width:1.00px;height:41.50px;background:#eeeeee"></div>
<div class="t" style="left:215.00px;top:204.65px;font-size:10.3px;line-height:12.36px;color:#4d4d4d;font-weight:normal;-webkit-text-stroke-width:0.05px">Детализация по складам</div>
<div class="t" style="left:215.00px;top:218.55px;font-size:10.3px;line-height:12.36px;color:#4d4d4d;font-weight:normal;-webkit-text-stroke-width:0.05px">Артикул</div>
<div class="t" style="left:265.50px;top:218.55px;font-size:10.3px;line-height:12.36px;color:#4d4d4d;font-weight:normal;-webkit-text-stroke-width:0.05px">Номенклатура</div>
<div class="t" style="left:493.00px;top:218.55px;font-size:10.3px;line-height:12.36px;color:#4d4d4d;font-weight:normal;-webkit-text-stroke-width:0.05px">Характеристика</div>
<div class="t" style="left:590.50px;top:218.95px;font-size:10.3px;line-height:12.36px;color:#4d4d4d;font-weight:normal;-webkit-text-stroke-width:0.05px">Ед.</div>
<div class="t" style="left:590.50px;top:230.85px;font-size:10.3px;line-height:12.36px;color:#4d4d4d;font-weight:normal;-webkit-text-stroke-width:0.05px">изм.</div>
<div class="t" style="left:624.00px;top:204.85px;font-size:10.3px;line-height:12.36px;color:#4d4d4d;font-weight:normal;-webkit-text-stroke-width:0.05px">Планы</div>
<div class="t" style="left:624.00px;top:216.75px;font-size:10.3px;line-height:12.36px;color:#4d4d4d;font-weight:normal;-webkit-text-stroke-width:0.05px">потребностей</div>
<div class="t" style="left:698.50px;top:204.85px;font-size:10.3px;line-height:12.36px;color:#4d4d4d;font-weight:normal;-webkit-text-stroke-width:0.05px">Планы</div>
<div class="t" style="left:698.50px;top:216.75px;font-size:10.3px;line-height:12.36px;color:#4d4d4d;font-weight:normal;-webkit-text-stroke-width:0.05px">обеспечения</div>
<div class="t" style="left:771.50px;top:204.85px;font-size:10.3px;line-height:12.36px;color:#4d4d4d;font-weight:normal;-webkit-text-stroke-width:0.05px">Отклонение,</div>
<div class="t" style="left:771.50px;top:216.75px;font-size:10.3px;line-height:12.36px;color:#4d4d4d;font-weight:normal;-webkit-text-stroke-width:0.05px">%</div>
<div class="t" style="left:842.00px;top:204.85px;font-size:10.3px;line-height:12.36px;color:#4d4d4d;font-weight:normal;-webkit-text-stroke-width:0.05px">Отклонение</div>
<div class="b" style="left:191.00px;top:243.00px;width:1059.00px;height:1.00px;background:#a6a6a6"></div>
<div class="b" style="left:212.50px;top:253.85px;width:692.30px;height:1.00px;background:#eeeeee"></div>
<div class="b" style="left:620.50px;top:243.20px;width:1.00px;height:10.65px;background:#eeeeee"></div>
<div class="b" style="left:695.50px;top:243.20px;width:1.00px;height:10.65px;background:#eeeeee"></div>
<div class="b" style="left:768.50px;top:243.20px;width:1.00px;height:10.65px;background:#eeeeee"></div>
<div class="b" style="left:839.00px;top:243.20px;width:1.00px;height:10.65px;background:#eeeeee"></div>
<div class="b" style="left:904.50px;top:243.20px;width:1.00px;height:10.65px;background:#eeeeee"></div>
<div class="t" style="left:214.50px;top:244.51px;font-size:8.12px;line-height:9.74px;color:#3a3a3a;font-weight:normal;-webkit-text-stroke-width:0;transform:scaleY(1.1);transform-origin:0 80%">По всем складам</div>
<div class="t" style="right:586.20px;top:244.63px;font-size:8px;line-height:9.60px;color:#3a3a3a;font-weight:normal;text-align:right;-webkit-text-stroke-width:0;transform:scaleY(1.1);transform-origin:100% 80%">67 375,000</div>
<div class="t" style="right:514.20px;top:244.63px;font-size:8px;line-height:9.60px;color:#3a3a3a;font-weight:normal;text-align:right;-webkit-text-stroke-width:0;transform:scaleY(1.1);transform-origin:100% 80%">12 200,000</div>
<div class="t" style="right:442.50px;top:244.63px;font-size:8px;line-height:9.60px;color:#3a3a3a;font-weight:normal;text-align:right;-webkit-text-stroke-width:0;transform:scaleY(1.1);transform-origin:100% 80%">-81,89</div>
<div class="t" style="right:376.70px;top:244.63px;font-size:8px;line-height:9.60px;color:#3a3a3a;font-weight:normal;text-align:right;-webkit-text-stroke-width:0;transform:scaleY(1.1);transform-origin:100% 80%">-55 175,00</div>
<div class="b" style="left:212.50px;top:264.50px;width:692.30px;height:1.00px;background:#eeeeee"></div>
<div class="b" style="left:262.00px;top:253.85px;width:1.00px;height:10.65px;background:#eeeeee"></div>
<div class="b" style="left:490.00px;top:253.85px;width:1.00px;height:10.65px;background:#eeeeee"></div>
<div class="b" style="left:587.00px;top:253.85px;width:1.00px;height:10.65px;background:#eeeeee"></div>
<div class="b" style="left:620.50px;top:253.85px;width:1.00px;height:10.65px;background:#eeeeee"></div>
<div class="b" style="left:695.50px;top:253.85px;width:1.00px;height:10.65px;background:#eeeeee"></div>
<div class="b" style="left:768.50px;top:253.85px;width:1.00px;height:10.65px;background:#eeeeee"></div>
<div class="b" style="left:839.00px;top:253.85px;width:1.00px;height:10.65px;background:#eeeeee"></div>
<div class="b" style="left:904.50px;top:253.85px;width:1.00px;height:10.65px;background:#eeeeee"></div>
<div class="t" style="left:276.20px;top:255.16px;font-size:8.12px;line-height:9.74px;color:#3a3a3a;font-weight:normal;-webkit-text-stroke-width:0;transform:scaleY(1.1);transform-origin:0 80%">Винт М12х100.56 ZN DIN7991</div>
<div class="t" style="left:590.00px;top:255.16px;font-size:8.12px;line-height:9.74px;color:#3a3a3a;font-weight:normal;-webkit-text-stroke-width:0;transform:scaleY(1.1);transform-origin:0 80%">шт</div>
<div class="t" style="right:586.20px;top:255.28px;font-size:8px;line-height:9.60px;color:#3a3a3a;font-weight:normal;text-align:right;-webkit-text-stroke-width:0;transform:scaleY(1.1);transform-origin:100% 80%">1 600,000</div>
<div class="t" style="right:442.50px;top:255.28px;font-size:8px;line-height:9.60px;color:#3a3a3a;font-weight:normal;text-align:right;-webkit-text-stroke-width:0;transform:scaleY(1.1);transform-origin:100% 80%">-100,00</div>
<div class="t" style="right:376.70px;top:255.28px;font-size:8px;line-height:9.60px;color:#3a3a3a;font-weight:normal;text-align:right;-webkit-text-stroke-width:0;transform:scaleY(1.1);transform-origin:100% 80%">-1 600,00</div>
<div class="b" style="left:212.50px;top:275.15px;width:692.30px;height:1.00px;background:#eeeeee"></div>
<div class="b" style="left:262.00px;top:264.50px;width:1.00px;height:10.65px;background:#eeeeee"></div>
<div class="b" style="left:490.00px;top:264.50px;width:1.00px;height:10.65px;background:#eeeeee"></div>
<div class="b" style="left:587.00px;top:264.50px;width:1.00px;height:10.65px;background:#eeeeee"></div>
<div class="b" style="left:620.50px;top:264.50px;width:1.00px;height:10.65px;background:#eeeeee"></div>
<div class="b" style="left:695.50px;top:264.50px;width:1.00px;height:10.65px;background:#eeeeee"></div>
<div class="b" style="left:768.50px;top:264.50px;width:1.00px;height:10.65px;background:#eeeeee"></div>
<div class="b" style="left:839.00px;top:264.50px;width:1.00px;height:10.65px;background:#eeeeee"></div>
<div class="b" style="left:904.50px;top:264.50px;width:1.00px;height:10.65px;background:#eeeeee"></div>
<div class="t" style="left:276.20px;top:265.81px;font-size:8.12px;line-height:9.74px;color:#3a3a3a;font-weight:normal;-webkit-text-stroke-width:0;transform:scaleY(1.1);transform-origin:0 80%">Гайка М12.8 ZN DIN6927</div>
<div class="t" style="left:590.00px;top:265.81px;font-size:8.12px;line-height:9.74px;color:#3a3a3a;font-weight:normal;-webkit-text-stroke-width:0;transform:scaleY(1.1);transform-origin:0 80%">шт</div>
<div class="t" style="right:586.20px;top:265.93px;font-size:8px;line-height:9.60px;color:#3a3a3a;font-weight:normal;text-align:right;-webkit-text-stroke-width:0;transform:scaleY(1.1);transform-origin:100% 80%">1 600,000</div>
<div class="t" style="right:442.50px;top:265.93px;font-size:8px;line-height:9.60px;color:#3a3a3a;font-weight:normal;text-align:right;-webkit-text-stroke-width:0;transform:scaleY(1.1);transform-origin:100% 80%">-100,00</div>
<div class="t" style="right:376.70px;top:265.93px;font-size:8px;line-height:9.60px;color:#3a3a3a;font-weight:normal;text-align:right;-webkit-text-stroke-width:0;transform:scaleY(1.1);transform-origin:100% 80%">-1 600,00</div>
<div class="b" style="left:212.50px;top:285.80px;width:692.30px;height:1.00px;background:#eeeeee"></div>
<div class="b" style="left:262.00px;top:275.15px;width:1.00px;height:10.65px;background:#eeeeee"></div>
<div class="b" style="left:490.00px;top:275.15px;width:1.00px;height:10.65px;background:#eeeeee"></div>
<div class="b" style="left:587.00px;top:275.15px;width:1.00px;height:10.65px;background:#eeeeee"></div>
<div class="b" style="left:620.50px;top:275.15px;width:1.00px;height:10.65px;background:#eeeeee"></div>
<div class="b" style="left:695.50px;top:275.15px;width:1.00px;height:10.65px;background:#eeeeee"></div>
<div class="b" style="left:768.50px;top:275.15px;width:1.00px;height:10.65px;background:#eeeeee"></div>
<div class="b" style="left:839.00px;top:275.15px;width:1.00px;height:10.65px;background:#eeeeee"></div>
<div class="b" style="left:904.50px;top:275.15px;width:1.00px;height:10.65px;background:#eeeeee"></div>
<div class="t" style="left:276.20px;top:276.46px;font-size:8.12px;line-height:9.74px;color:#3a3a3a;font-weight:normal;-webkit-text-stroke-width:0;transform:scaleY(1.1);transform-origin:0 80%">Инструкция эксплуатационная СИ1000</div>
<div class="t" style="left:590.00px;top:276.46px;font-size:8.12px;line-height:9.74px;color:#3a3a3a;font-weight:normal;-webkit-text-stroke-width:0;transform:scaleY(1.1);transform-origin:0 80%">шт</div>
<div class="t" style="right:586.20px;top:276.58px;font-size:8px;line-height:9.60px;color:#3a3a3a;font-weight:normal;text-align:right;-webkit-text-stroke-width:0;transform:scaleY(1.1);transform-origin:100% 80%">380,000</div>
<div class="t" style="right:442.50px;top:276.58px;font-size:8px;line-height:9.60px;color:#3a3a3a;font-weight:normal;text-align:right;-webkit-text-stroke-width:0;transform:scaleY(1.1);transform-origin:100% 80%">-100,00</div>
<div class="t" style="right:376.70px;top:276.58px;font-size:8px;line-height:9.60px;color:#3a3a3a;font-weight:normal;text-align:right;-webkit-text-stroke-width:0;transform:scaleY(1.1);transform-origin:100% 80%">-380,00</div>
<div class="b" style="left:212.50px;top:296.45px;width:692.30px;height:1.00px;background:#eeeeee"></div>
<div class="b" style="left:262.00px;top:285.80px;width:1.00px;height:10.65px;background:#eeeeee"></div>
<div class="b" style="left:490.00px;top:285.80px;width:1.00px;height:10.65px;background:#eeeeee"></div>
<div class="b" style="left:587.00px;top:285.80px;width:1.00px;height:10.65px;background:#eeeeee"></div>
<div class="b" style="left:620.50px;top:285.80px;width:1.00px;height:10.65px;background:#eeeeee"></div>
<div class="b" style="left:695.50px;top:285.80px;width:1.00px;height:10.65px;background:#eeeeee"></div>
<div class="b" style="left:768.50px;top:285.80px;width:1.00px;height:10.65px;background:#eeeeee"></div>
<div class="b" style="left:839.00px;top:285.80px;width:1.00px;height:10.65px;background:#eeeeee"></div>
<div class="b" style="left:904.50px;top:285.80px;width:1.00px;height:10.65px;background:#eeeeee"></div>
<div class="t" style="left:276.20px;top:287.11px;font-size:8.12px;line-height:9.74px;color:#3a3a3a;font-weight:normal;-webkit-text-stroke-width:0;transform:scaleY(1.1);transform-origin:0 80%">Комплект упаковочный СИ1000</div>
<div class="t" style="left:590.00px;top:287.11px;font-size:8.12px;line-height:9.74px;color:#3a3a3a;font-weight:normal;-webkit-text-stroke-width:0;transform:scaleY(1.1);transform-origin:0 80%">шт</div>
<div class="t" style="right:586.20px;top:287.23px;font-size:8px;line-height:9.60px;color:#3a3a3a;font-weight:normal;text-align:right;-webkit-text-stroke-width:0;transform:scaleY(1.1);transform-origin:100% 80%">380,000</div>
<div class="t" style="right:442.50px;top:287.23px;font-size:8px;line-height:9.60px;color:#3a3a3a;font-weight:normal;text-align:right;-webkit-text-stroke-width:0;transform:scaleY(1.1);transform-origin:100% 80%">-100,00</div>
<div class="t" style="right:376.70px;top:287.23px;font-size:8px;line-height:9.60px;color:#3a3a3a;font-weight:normal;text-align:right;-webkit-text-stroke-width:0;transform:scaleY(1.1);transform-origin:100% 80%">-380,00</div>
<div class="b" style="left:212.50px;top:307.10px;width:692.30px;height:1.00px;background:#eeeeee"></div>
<div class="b" style="left:262.00px;top:296.45px;width:1.00px;height:10.65px;background:#eeeeee"></div>
<div class="b" style="left:490.00px;top:296.45px;width:1.00px;height:10.65px;background:#eeeeee"></div>
<div class="b" style="left:587.00px;top:296.45px;width:1.00px;height:10.65px;background:#eeeeee"></div>
<div class="b" style="left:620.50px;top:296.45px;width:1.00px;height:10.65px;background:#eeeeee"></div>
<div class="b" style="left:695.50px;top:296.45px;width:1.00px;height:10.65px;background:#eeeeee"></div>
<div class="b" style="left:768.50px;top:296.45px;width:1.00px;height:10.65px;background:#eeeeee"></div>
<div class="b" style="left:839.00px;top:296.45px;width:1.00px;height:10.65px;background:#eeeeee"></div>
<div class="b" style="left:904.50px;top:296.45px;width:1.00px;height:10.65px;background:#eeeeee"></div>
<div class="t" style="left:276.20px;top:297.76px;font-size:8.12px;line-height:9.74px;color:#3a3a3a;font-weight:normal;-webkit-text-stroke-width:0;transform:scaleY(1.1);transform-origin:0 80%">Лист 3 Ст3пс5</div>
<div class="t" style="left:590.00px;top:297.76px;font-size:8.12px;line-height:9.74px;color:#3a3a3a;font-weight:normal;-webkit-text-stroke-width:0;transform:scaleY(1.1);transform-origin:0 80%">кг</div>
<div class="t" style="right:586.20px;top:297.88px;font-size:8px;line-height:9.60px;color:#3a3a3a;font-weight:normal;text-align:right;-webkit-text-stroke-width:0;transform:scaleY(1.1);transform-origin:100% 80%">6 696,000</div>
<div class="t" style="right:442.50px;top:297.88px;font-size:8px;line-height:9.60px;color:#3a3a3a;font-weight:normal;text-align:right;-webkit-text-stroke-width:0;transform:scaleY(1.1);transform-origin:100% 80%">-100,00</div>
<div class="t" style="right:376.70px;top:297.88px;font-size:8px;line-height:9.60px;color:#3a3a3a;font-weight:normal;text-align:right;-webkit-text-stroke-width:0;transform:scaleY(1.1);transform-origin:100% 80%">-6 696,00</div>
<div class="b" style="left:212.50px;top:317.75px;width:692.30px;height:1.00px;background:#eeeeee"></div>
<div class="b" style="left:262.00px;top:307.10px;width:1.00px;height:10.65px;background:#eeeeee"></div>
<div class="b" style="left:490.00px;top:307.10px;width:1.00px;height:10.65px;background:#eeeeee"></div>
<div class="b" style="left:587.00px;top:307.10px;width:1.00px;height:10.65px;background:#eeeeee"></div>
<div class="b" style="left:620.50px;top:307.10px;width:1.00px;height:10.65px;background:#eeeeee"></div>
<div class="b" style="left:695.50px;top:307.10px;width:1.00px;height:10.65px;background:#eeeeee"></div>
<div class="b" style="left:768.50px;top:307.10px;width:1.00px;height:10.65px;background:#eeeeee"></div>
<div class="b" style="left:839.00px;top:307.10px;width:1.00px;height:10.65px;background:#eeeeee"></div>
<div class="b" style="left:904.50px;top:307.10px;width:1.00px;height:10.65px;background:#eeeeee"></div>
<div class="t" style="left:276.20px;top:308.41px;font-size:8.12px;line-height:9.74px;color:#3a3a3a;font-weight:normal;-webkit-text-stroke-width:0;transform:scaleY(1.1);transform-origin:0 80%">Лист 6 Ст3пс5</div>
<div class="t" style="left:590.00px;top:308.41px;font-size:8.12px;line-height:9.74px;color:#3a3a3a;font-weight:normal;-webkit-text-stroke-width:0;transform:scaleY(1.1);transform-origin:0 80%">кг</div>
<div class="t" style="right:586.20px;top:308.53px;font-size:8px;line-height:9.60px;color:#3a3a3a;font-weight:normal;text-align:right;-webkit-text-stroke-width:0;transform:scaleY(1.1);transform-origin:100% 80%">17 920,000</div>
<div class="t" style="right:442.50px;top:308.53px;font-size:8px;line-height:9.60px;color:#3a3a3a;font-weight:normal;text-align:right;-webkit-text-stroke-width:0;transform:scaleY(1.1);transform-origin:100% 80%">-100,00</div>
<div class="t" style="right:376.70px;top:308.53px;font-size:8px;line-height:9.60px;color:#3a3a3a;font-weight:normal;text-align:right;-webkit-text-stroke-width:0;transform:scaleY(1.1);transform-origin:100% 80%">-17 920,00</div>
<div class="b" style="left:212.50px;top:328.40px;width:692.30px;height:1.00px;background:#eeeeee"></div>
<div class="b" style="left:262.00px;top:317.75px;width:1.00px;height:10.65px;background:#eeeeee"></div>
<div class="b" style="left:490.00px;top:317.75px;width:1.00px;height:10.65px;background:#eeeeee"></div>
<div class="b" style="left:587.00px;top:317.75px;width:1.00px;height:10.65px;background:#eeeeee"></div>
<div class="b" style="left:620.50px;top:317.75px;width:1.00px;height:10.65px;background:#eeeeee"></div>
<div class="b" style="left:695.50px;top:317.75px;width:1.00px;height:10.65px;background:#eeeeee"></div>
<div class="b" style="left:768.50px;top:317.75px;width:1.00px;height:10.65px;background:#eeeeee"></div>
<div class="b" style="left:839.00px;top:317.75px;width:1.00px;height:10.65px;background:#eeeeee"></div>
<div class="b" style="left:904.50px;top:317.75px;width:1.00px;height:10.65px;background:#eeeeee"></div>
<div class="t" style="left:276.20px;top:319.06px;font-size:8.12px;line-height:9.74px;color:#3a3a3a;font-weight:normal;-webkit-text-stroke-width:0;transform:scaleY(1.1);transform-origin:0 80%">Проволока электродная СВ-08Г2С 1,0 мм</div>
<div class="t" style="left:590.00px;top:319.06px;font-size:8.12px;line-height:9.74px;color:#3a3a3a;font-weight:normal;-webkit-text-stroke-width:0;transform:scaleY(1.1);transform-origin:0 80%">кг</div>
<div class="t" style="right:586.20px;top:319.18px;font-size:8px;line-height:9.60px;color:#3a3a3a;font-weight:normal;text-align:right;-webkit-text-stroke-width:0;transform:scaleY(1.1);transform-origin:100% 80%">174,000</div>
<div class="t" style="right:442.50px;top:319.18px;font-size:8px;line-height:9.60px;color:#3a3a3a;font-weight:normal;text-align:right;-webkit-text-stroke-width:0;transform:scaleY(1.1);transform-origin:100% 80%">-100,00</div>
<div class="t" style="right:376.70px;top:319.18px;font-size:8px;line-height:9.60px;color:#3a3a3a;font-weight:normal;text-align:right;-webkit-text-stroke-width:0;transform:scaleY(1.1);transform-origin:100% 80%">-174,00</div>
<div class="b" style="left:212.50px;top:339.05px;width:692.30px;height:1.00px;background:#eeeeee"></div>
<div class="b" style="left:262.00px;top:328.40px;width:1.00px;height:10.65px;background:#eeeeee"></div>
<div class="b" style="left:490.00px;top:328.40px;width:1.00px;height:10.65px;background:#eeeeee"></div>
<div class="b" style="left:587.00px;top:328.40px;width:1.00px;height:10.65px;background:#eeeeee"></div>
<div class="b" style="left:620.50px;top:328.40px;width:1.00px;height:10.65px;background:#eeeeee"></div>
<div class="b" style="left:695.50px;top:328.40px;width:1.00px;height:10.65px;background:#eeeeee"></div>
<div class="b" style="left:768.50px;top:328.40px;width:1.00px;height:10.65px;background:#eeeeee"></div>
<div class="b" style="left:839.00px;top:328.40px;width:1.00px;height:10.65px;background:#eeeeee"></div>
<div class="b" style="left:904.50px;top:328.40px;width:1.00px;height:10.65px;background:#eeeeee"></div>
<div class="t" style="left:276.20px;top:329.71px;font-size:8.12px;line-height:9.74px;color:#3a3a3a;font-weight:normal;-webkit-text-stroke-width:0;transform:scaleY(1.1);transform-origin:0 80%">Сольвент ГОСТ 10214-78</div>
<div class="t" style="left:590.00px;top:329.71px;font-size:8.12px;line-height:9.74px;color:#3a3a3a;font-weight:normal;-webkit-text-stroke-width:0;transform:scaleY(1.1);transform-origin:0 80%">кг</div>
<div class="t" style="right:586.20px;top:329.83px;font-size:8px;line-height:9.60px;color:#3a3a3a;font-weight:normal;text-align:right;-webkit-text-stroke-width:0;transform:scaleY(1.1);transform-origin:100% 80%">114,000</div>
<div class="t" style="right:442.50px;top:329.83px;font-size:8px;line-height:9.60px;color:#3a3a3a;font-weight:normal;text-align:right;-webkit-text-stroke-width:0;transform:scaleY(1.1);transform-origin:100% 80%">-100,00</div>
<div class="t" style="right:376.70px;top:329.83px;font-size:8px;line-height:9.60px;color:#3a3a3a;font-weight:normal;text-align:right;-webkit-text-stroke-width:0;transform:scaleY(1.1);transform-origin:100% 80%">-114,00</div>
<div class="b" style="left:212.50px;top:349.70px;width:692.30px;height:1.00px;background:#eeeeee"></div>
<div class="b" style="left:262.00px;top:339.05px;width:1.00px;height:10.65px;background:#eeeeee"></div>
<div class="b" style="left:490.00px;top:339.05px;width:1.00px;height:10.65px;background:#eeeeee"></div>
<div class="b" style="left:587.00px;top:339.05px;width:1.00px;height:10.65px;background:#eeeeee"></div>
<div class="b" style="left:620.50px;top:339.05px;width:1.00px;height:10.65px;background:#eeeeee"></div>
<div class="b" style="left:695.50px;top:339.05px;width:1.00px;height:10.65px;background:#eeeeee"></div>
<div class="b" style="left:768.50px;top:339.05px;width:1.00px;height:10.65px;background:#eeeeee"></div>
<div class="b" style="left:839.00px;top:339.05px;width:1.00px;height:10.65px;background:#eeeeee"></div>
<div class="b" style="left:904.50px;top:339.05px;width:1.00px;height:10.65px;background:#eeeeee"></div>
<div class="t" style="left:276.20px;top:340.36px;font-size:8.12px;line-height:9.74px;color:#3a3a3a;font-weight:normal;-webkit-text-stroke-width:0;transform:scaleY(1.1);transform-origin:0 80%">Труба квадратная 25х25х2 Ст3пс</div>
<div class="t" style="left:590.00px;top:340.36px;font-size:8.12px;line-height:9.74px;color:#3a3a3a;font-weight:normal;-webkit-text-stroke-width:0;transform:scaleY(1.1);transform-origin:0 80%">кг</div>
<div class="t" style="right:586.20px;top:340.48px;font-size:8px;line-height:9.60px;color:#3a3a3a;font-weight:normal;text-align:right;-webkit-text-stroke-width:0;transform:scaleY(1.1);transform-origin:100% 80%">864,000</div>
<div class="t" style="right:442.50px;top:340.48px;font-size:8px;line-height:9.60px;color:#3a3a3a;font-weight:normal;text-align:right;-webkit-text-stroke-width:0;transform:scaleY(1.1);transform-origin:100% 80%">-100,00</div>
<div class="t" style="right:376.70px;top:340.48px;font-size:8px;line-height:9.60px;color:#3a3a3a;font-weight:normal;text-align:right;-webkit-text-stroke-width:0;transform:scaleY(1.1);transform-origin:100% 80%">-864,00</div>
<div class="b" style="left:212.50px;top:360.35px;width:692.30px;height:1.00px;background:#eeeeee"></div>
<div class="b" style="left:262.00px;top:349.70px;width:1.00px;height:10.65px;background:#eeeeee"></div>
<div class="b" style="left:490.00px;top:349.70px;width:1.00px;height:10.65px;background:#eeeeee"></div>
<div class="b" style="left:587.00px;top:349.70px;width:1.00px;height:10.65px;background:#eeeeee"></div>
<div class="b" style="left:620.50px;top:349.70px;width:1.00px;height:10.65px;background:#eeeeee"></div>
<div class="b" style="left:695.50px;top:349.70px;width:1.00px;height:10.65px;background:#eeeeee"></div>
<div class="b" style="left:768.50px;top:349.70px;width:1.00px;height:10.65px;background:#eeeeee"></div>
<div class="b" style="left:839.00px;top:349.70px;width:1.00px;height:10.65px;background:#eeeeee"></div>
<div class="b" style="left:904.50px;top:349.70px;width:1.00px;height:10.65px;background:#eeeeee"></div>
<div class="t" style="left:276.20px;top:351.01px;font-size:8.12px;line-height:9.74px;color:#3a3a3a;font-weight:normal;-webkit-text-stroke-width:0;transform:scaleY(1.1);transform-origin:0 80%">Труба квадратная 50х50х4 Ст3пс</div>
<div class="t" style="left:590.00px;top:351.01px;font-size:8.12px;line-height:9.74px;color:#3a3a3a;font-weight:normal;-webkit-text-stroke-width:0;transform:scaleY(1.1);transform-origin:0 80%">кг</div>
<div class="t" style="right:586.20px;top:351.13px;font-size:8px;line-height:9.60px;color:#3a3a3a;font-weight:normal;text-align:right;-webkit-text-stroke-width:0;transform:scaleY(1.1);transform-origin:100% 80%">25 596,000</div>
<div class="t" style="right:442.50px;top:351.13px;font-size:8px;line-height:9.60px;color:#3a3a3a;font-weight:normal;text-align:right;-webkit-text-stroke-width:0;transform:scaleY(1.1);transform-origin:100% 80%">-100,00</div>
<div class="t" style="right:376.70px;top:351.13px;font-size:8px;line-height:9.60px;color:#3a3a3a;font-weight:normal;text-align:right;-webkit-text-stroke-width:0;transform:scaleY(1.1);transform-origin:100% 80%">-25 596,00</div>
<div class="b" style="left:212.50px;top:371.00px;width:692.30px;height:1.00px;background:#eeeeee"></div>
<div class="b" style="left:262.00px;top:360.35px;width:1.00px;height:10.65px;background:#eeeeee"></div>
<div class="b" style="left:490.00px;top:360.35px;width:1.00px;height:10.65px;background:#eeeeee"></div>
<div class="b" style="left:587.00px;top:360.35px;width:1.00px;height:10.65px;background:#eeeeee"></div>
<div class="b" style="left:620.50px;top:360.35px;width:1.00px;height:10.65px;background:#eeeeee"></div>
<div class="b" style="left:695.50px;top:360.35px;width:1.00px;height:10.65px;background:#eeeeee"></div>
<div class="b" style="left:768.50px;top:360.35px;width:1.00px;height:10.65px;background:#eeeeee"></div>
<div class="b" style="left:839.00px;top:360.35px;width:1.00px;height:10.65px;background:#eeeeee"></div>
<div class="b" style="left:904.50px;top:360.35px;width:1.00px;height:10.65px;background:#eeeeee"></div>
<div class="t" style="left:276.20px;top:361.66px;font-size:8.12px;line-height:9.74px;color:#3a3a3a;font-weight:normal;-webkit-text-stroke-width:0;transform:scaleY(1.1);transform-origin:0 80%">Фанера берёзовая ФК 21 мм сорт 4/4</div>
<div class="t" style="left:590.00px;top:361.66px;font-size:8.12px;line-height:9.74px;color:#3a3a3a;font-weight:normal;-webkit-text-stroke-width:0;transform:scaleY(1.1);transform-origin:0 80%">м3</div>
<div class="t" style="right:586.20px;top:361.78px;font-size:8px;line-height:9.60px;color:#3a3a3a;font-weight:normal;text-align:right;-webkit-text-stroke-width:0;transform:scaleY(1.1);transform-origin:100% 80%">3,000</div>
<div class="t" style="right:442.50px;top:361.78px;font-size:8px;line-height:9.60px;color:#3a3a3a;font-weight:normal;text-align:right;-webkit-text-stroke-width:0;transform:scaleY(1.1);transform-origin:100% 80%">-100,00</div>
<div class="t" style="right:376.70px;top:361.78px;font-size:8px;line-height:9.60px;color:#3a3a3a;font-weight:normal;text-align:right;-webkit-text-stroke-width:0;transform:scaleY(1.1);transform-origin:100% 80%">-3,00</div>
<div class="b" style="left:212.50px;top:381.65px;width:692.30px;height:1.00px;background:#eeeeee"></div>
<div class="b" style="left:262.00px;top:371.00px;width:1.00px;height:10.65px;background:#eeeeee"></div>
<div class="b" style="left:490.00px;top:371.00px;width:1.00px;height:10.65px;background:#eeeeee"></div>
<div class="b" style="left:587.00px;top:371.00px;width:1.00px;height:10.65px;background:#eeeeee"></div>
<div class="b" style="left:620.50px;top:371.00px;width:1.00px;height:10.65px;background:#eeeeee"></div>
<div class="b" style="left:695.50px;top:371.00px;width:1.00px;height:10.65px;background:#eeeeee"></div>
<div class="b" style="left:768.50px;top:371.00px;width:1.00px;height:10.65px;background:#eeeeee"></div>
<div class="b" style="left:839.00px;top:371.00px;width:1.00px;height:10.65px;background:#eeeeee"></div>
<div class="b" style="left:904.50px;top:371.00px;width:1.00px;height:10.65px;background:#eeeeee"></div>
<div class="t" style="left:276.20px;top:372.31px;font-size:8.12px;line-height:9.74px;color:#3a3a3a;font-weight:normal;-webkit-text-stroke-width:0;transform:scaleY(1.1);transform-origin:0 80%">Эмаль ПФ-115 (эмаль) ГОСТ Р 51691</div>
<div class="t" style="left:492.50px;top:372.31px;font-size:8.12px;line-height:9.74px;color:#3a3a3a;font-weight:normal;-webkit-text-stroke-width:0;transform:scaleY(1.1);transform-origin:0 80%">RAL 5019 (синий)</div>
<div class="t" style="left:590.00px;top:372.31px;font-size:8.12px;line-height:9.74px;color:#3a3a3a;font-weight:normal;-webkit-text-stroke-width:0;transform:scaleY(1.1);transform-origin:0 80%">кг</div>
<div class="t" style="right:586.20px;top:372.43px;font-size:8px;line-height:9.60px;color:#3a3a3a;font-weight:normal;text-align:right;-webkit-text-stroke-width:0;transform:scaleY(1.1);transform-origin:100% 80%">114,000</div>
<div class="t" style="right:442.50px;top:372.43px;font-size:8px;line-height:9.60px;color:#3a3a3a;font-weight:normal;text-align:right;-webkit-text-stroke-width:0;transform:scaleY(1.1);transform-origin:100% 80%">-100,00</div>
<div class="t" style="right:376.70px;top:372.43px;font-size:8px;line-height:9.60px;color:#3a3a3a;font-weight:normal;text-align:right;-webkit-text-stroke-width:0;transform:scaleY(1.1);transform-origin:100% 80%">-114,00</div>
<div class="b" style="left:212.50px;top:392.30px;width:692.30px;height:1.00px;background:#eeeeee"></div>
<div class="b" style="left:262.00px;top:381.65px;width:1.00px;height:10.65px;background:#eeeeee"></div>
<div class="b" style="left:490.00px;top:381.65px;width:1.00px;height:10.65px;background:#eeeeee"></div>
<div class="b" style="left:587.00px;top:381.65px;width:1.00px;height:10.65px;background:#eeeeee"></div>
<div class="b" style="left:620.50px;top:381.65px;width:1.00px;height:10.65px;background:#eeeeee"></div>
<div class="b" style="left:695.50px;top:381.65px;width:1.00px;height:10.65px;background:#eeeeee"></div>
<div class="b" style="left:768.50px;top:381.65px;width:1.00px;height:10.65px;background:#eeeeee"></div>
<div class="b" style="left:839.00px;top:381.65px;width:1.00px;height:10.65px;background:#eeeeee"></div>
<div class="b" style="left:904.50px;top:381.65px;width:1.00px;height:10.65px;background:#eeeeee"></div>
<div class="t" style="left:276.20px;top:382.96px;font-size:8.12px;line-height:9.74px;color:#3a3a3a;font-weight:normal;-webkit-text-stroke-width:0;transform:scaleY(1.1);transform-origin:0 80%">Эмаль ПФ-115 (эмаль) ГОСТ Р 51691</div>
<div class="t" style="left:492.50px;top:382.96px;font-size:8.12px;line-height:9.74px;color:#3a3a3a;font-weight:normal;-webkit-text-stroke-width:0;transform:scaleY(1.1);transform-origin:0 80%">RAL 7001 (серый)</div>
<div class="t" style="left:590.00px;top:382.96px;font-size:8.12px;line-height:9.74px;color:#3a3a3a;font-weight:normal;-webkit-text-stroke-width:0;transform:scaleY(1.1);transform-origin:0 80%">кг</div>
<div class="t" style="right:586.20px;top:383.08px;font-size:8px;line-height:9.60px;color:#3a3a3a;font-weight:normal;text-align:right;-webkit-text-stroke-width:0;transform:scaleY(1.1);transform-origin:100% 80%">114,000</div>
<div class="t" style="right:442.50px;top:383.08px;font-size:8px;line-height:9.60px;color:#3a3a3a;font-weight:normal;text-align:right;-webkit-text-stroke-width:0;transform:scaleY(1.1);transform-origin:100% 80%">-100,00</div>
<div class="t" style="right:376.70px;top:383.08px;font-size:8px;line-height:9.60px;color:#3a3a3a;font-weight:normal;text-align:right;-webkit-text-stroke-width:0;transform:scaleY(1.1);transform-origin:100% 80%">-114,00</div>
<div class="b" style="left:212.50px;top:402.95px;width:692.30px;height:1.00px;background:#eeeeee"></div>
<div class="b" style="left:262.00px;top:392.30px;width:1.00px;height:10.65px;background:#eeeeee"></div>
<div class="b" style="left:490.00px;top:392.30px;width:1.00px;height:10.65px;background:#eeeeee"></div>
<div class="b" style="left:587.00px;top:392.30px;width:1.00px;height:10.65px;background:#eeeeee"></div>
<div class="b" style="left:620.50px;top:392.30px;width:1.00px;height:10.65px;background:#eeeeee"></div>
<div class="b" style="left:695.50px;top:392.30px;width:1.00px;height:10.65px;background:#eeeeee"></div>
<div class="b" style="left:768.50px;top:392.30px;width:1.00px;height:10.65px;background:#eeeeee"></div>
<div class="b" style="left:839.00px;top:392.30px;width:1.00px;height:10.65px;background:#eeeeee"></div>
<div class="b" style="left:904.50px;top:392.30px;width:1.00px;height:10.65px;background:#eeeeee"></div>
<div class="t" style="left:276.20px;top:393.61px;font-size:8.12px;line-height:9.74px;color:#3a3a3a;font-weight:normal;-webkit-text-stroke-width:0;transform:scaleY(1.1);transform-origin:0 80%">СИ1000.001.000 Основание</div>
<div class="t" style="left:590.00px;top:393.61px;font-size:8.12px;line-height:9.74px;color:#3a3a3a;font-weight:normal;-webkit-text-stroke-width:0;transform:scaleY(1.1);transform-origin:0 80%">шт</div>
<div class="t" style="right:586.20px;top:393.73px;font-size:8px;line-height:9.60px;color:#3a3a3a;font-weight:normal;text-align:right;-webkit-text-stroke-width:0;transform:scaleY(1.1);transform-origin:100% 80%">200,000</div>
<div class="t" style="right:514.20px;top:393.73px;font-size:8px;line-height:9.60px;color:#3a3a3a;font-weight:normal;text-align:right;-webkit-text-stroke-width:0;transform:scaleY(1.1);transform-origin:100% 80%">200,000</div>
<div class="b" style="left:212.50px;top:413.60px;width:692.30px;height:1.00px;background:#eeeeee"></div>
<div class="b" style="left:262.00px;top:402.95px;width:1.00px;height:10.65px;background:#eeeeee"></div>
<div class="b" style="left:490.00px;top:402.95px;width:1.00px;height:10.65px;background:#eeeeee"></div>
<div class="b" style="left:587.00px;top:402.95px;width:1.00px;height:10.65px;background:#eeeeee"></div>
<div class="b" style="left:620.50px;top:402.95px;width:1.00px;height:10.65px;background:#eeeeee"></div>
<div class="b" style="left:695.50px;top:402.95px;width:1.00px;height:10.65px;background:#eeeeee"></div>
<div class="b" style="left:768.50px;top:402.95px;width:1.00px;height:10.65px;background:#eeeeee"></div>
<div class="b" style="left:839.00px;top:402.95px;width:1.00px;height:10.65px;background:#eeeeee"></div>
<div class="b" style="left:904.50px;top:402.95px;width:1.00px;height:10.65px;background:#eeeeee"></div>
<div class="t" style="left:276.20px;top:404.26px;font-size:8.12px;line-height:9.74px;color:#3a3a3a;font-weight:normal;-webkit-text-stroke-width:0;transform:scaleY(1.1);transform-origin:0 80%">СИ1000.001.001 Ребро верхнее</div>
<div class="t" style="left:590.00px;top:404.26px;font-size:8.12px;line-height:9.74px;color:#3a3a3a;font-weight:normal;-webkit-text-stroke-width:0;transform:scaleY(1.1);transform-origin:0 80%">шт</div>
<div class="t" style="right:586.20px;top:404.38px;font-size:8px;line-height:9.60px;color:#3a3a3a;font-weight:normal;text-align:right;-webkit-text-stroke-width:0;transform:scaleY(1.1);transform-origin:100% 80%">800,000</div>
<div class="t" style="right:514.20px;top:404.38px;font-size:8px;line-height:9.60px;color:#3a3a3a;font-weight:normal;text-align:right;-webkit-text-stroke-width:0;transform:scaleY(1.1);transform-origin:100% 80%">800,000</div>
<div class="b" style="left:212.50px;top:424.25px;width:692.30px;height:1.00px;background:#eeeeee"></div>
<div class="b" style="left:262.00px;top:413.60px;width:1.00px;height:10.65px;background:#eeeeee"></div>
<div class="b" style="left:490.00px;top:413.60px;width:1.00px;height:10.65px;background:#eeeeee"></div>
<div class="b" style="left:587.00px;top:413.60px;width:1.00px;height:10.65px;background:#eeeeee"></div>
<div class="b" style="left:620.50px;top:413.60px;width:1.00px;height:10.65px;background:#eeeeee"></div>
<div class="b" style="left:695.50px;top:413.60px;width:1.00px;height:10.65px;background:#eeeeee"></div>
<div class="b" style="left:768.50px;top:413.60px;width:1.00px;height:10.65px;background:#eeeeee"></div>
<div class="b" style="left:839.00px;top:413.60px;width:1.00px;height:10.65px;background:#eeeeee"></div>
<div class="b" style="left:904.50px;top:413.60px;width:1.00px;height:10.65px;background:#eeeeee"></div>
<div class="t" style="left:276.20px;top:414.91px;font-size:8.12px;line-height:9.74px;color:#3a3a3a;font-weight:normal;-webkit-text-stroke-width:0;transform:scaleY(1.1);transform-origin:0 80%">СИ1000.001.002 Ребро нижнее</div>
<div class="t" style="left:590.00px;top:414.91px;font-size:8.12px;line-height:9.74px;color:#3a3a3a;font-weight:normal;-webkit-text-stroke-width:0;transform:scaleY(1.1);transform-origin:0 80%">шт</div>
<div class="t" style="right:586.20px;top:415.03px;font-size:8px;line-height:9.60px;color:#3a3a3a;font-weight:normal;text-align:right;-webkit-text-stroke-width:0;transform:scaleY(1.1);transform-origin:100% 80%">400,000</div>
<div class="t" style="right:514.20px;top:415.03px;font-size:8px;line-height:9.60px;color:#3a3a3a;font-weight:normal;text-align:right;-webkit-text-stroke-width:0;transform:scaleY(1.1);transform-origin:100% 80%">400,000</div>
<div class="b" style="left:212.50px;top:434.90px;width:692.30px;height:1.00px;background:#eeeeee"></div>
<div class="b" style="left:262.00px;top:424.25px;width:1.00px;height:10.65px;background:#eeeeee"></div>
<div class="b" style="left:490.00px;top:424.25px;width:1.00px;height:10.65px;background:#eeeeee"></div>
<div class="b" style="left:587.00px;top:424.25px;width:1.00px;height:10.65px;background:#eeeeee"></div>
<div class="b" style="left:620.50px;top:424.25px;width:1.00px;height:10.65px;background:#eeeeee"></div>
<div class="b" style="left:695.50px;top:424.25px;width:1.00px;height:10.65px;background:#eeeeee"></div>
<div class="b" style="left:768.50px;top:424.25px;width:1.00px;height:10.65px;background:#eeeeee"></div>
<div class="b" style="left:839.00px;top:424.25px;width:1.00px;height:10.65px;background:#eeeeee"></div>
<div class="b" style="left:904.50px;top:424.25px;width:1.00px;height:10.65px;background:#eeeeee"></div>
<div class="t" style="left:276.20px;top:425.56px;font-size:8.12px;line-height:9.74px;color:#3a3a3a;font-weight:normal;-webkit-text-stroke-width:0;transform:scaleY(1.1);transform-origin:0 80%">СИ1000.001.003 Ребро верхнее</div>
<div class="t" style="left:590.00px;top:425.56px;font-size:8.12px;line-height:9.74px;color:#3a3a3a;font-weight:normal;-webkit-text-stroke-width:0;transform:scaleY(1.1);transform-origin:0 80%">шт</div>
<div class="t" style="right:586.20px;top:425.68px;font-size:8px;line-height:9.60px;color:#3a3a3a;font-weight:normal;text-align:right;-webkit-text-stroke-width:0;transform:scaleY(1.1);transform-origin:100% 80%">800,000</div>
<div class="t" style="right:514.20px;top:425.68px;font-size:8px;line-height:9.60px;color:#3a3a3a;font-weight:normal;text-align:right;-webkit-text-stroke-width:0;transform:scaleY(1.1);transform-origin:100% 80%">800,000</div>
<div class="b" style="left:212.50px;top:445.55px;width:692.30px;height:1.00px;background:#eeeeee"></div>
<div class="b" style="left:262.00px;top:434.90px;width:1.00px;height:10.65px;background:#eeeeee"></div>
<div class="b" style="left:490.00px;top:434.90px;width:1.00px;height:10.65px;background:#eeeeee"></div>
<div class="b" style="left:587.00px;top:434.90px;width:1.00px;height:10.65px;background:#eeeeee"></div>
<div class="b" style="left:620.50px;top:434.90px;width:1.00px;height:10.65px;background:#eeeeee"></div>
<div class="b" style="left:695.50px;top:434.90px;width:1.00px;height:10.65px;background:#eeeeee"></div>
<div class="b" style="left:768.50px;top:434.90px;width:1.00px;height:10.65px;background:#eeeeee"></div>
<div class="b" style="left:839.00px;top:434.90px;width:1.00px;height:10.65px;background:#eeeeee"></div>
<div class="b" style="left:904.50px;top:434.90px;width:1.00px;height:10.65px;background:#eeeeee"></div>
<div class="t" style="left:276.20px;top:436.21px;font-size:8.12px;line-height:9.74px;color:#3a3a3a;font-weight:normal;-webkit-text-stroke-width:0;transform:scaleY(1.1);transform-origin:0 80%">СИ1000.001.004 Ребро нижнее</div>
<div class="t" style="left:590.00px;top:436.21px;font-size:8.12px;line-height:9.74px;color:#3a3a3a;font-weight:normal;-webkit-text-stroke-width:0;transform:scaleY(1.1);transform-origin:0 80%">шт</div>
<div class="t" style="right:586.20px;top:436.33px;font-size:8px;line-height:9.60px;color:#3a3a3a;font-weight:normal;text-align:right;-webkit-text-stroke-width:0;transform:scaleY(1.1);transform-origin:100% 80%">800,000</div>
<div class="t" style="right:514.20px;top:436.33px;font-size:8px;line-height:9.60px;color:#3a3a3a;font-weight:normal;text-align:right;-webkit-text-stroke-width:0;transform:scaleY(1.1);transform-origin:100% 80%">800,000</div>
<div class="b" style="left:212.50px;top:456.20px;width:692.30px;height:1.00px;background:#eeeeee"></div>
<div class="b" style="left:262.00px;top:445.55px;width:1.00px;height:10.65px;background:#eeeeee"></div>
<div class="b" style="left:490.00px;top:445.55px;width:1.00px;height:10.65px;background:#eeeeee"></div>
<div class="b" style="left:587.00px;top:445.55px;width:1.00px;height:10.65px;background:#eeeeee"></div>
<div class="b" style="left:620.50px;top:445.55px;width:1.00px;height:10.65px;background:#eeeeee"></div>
<div class="b" style="left:695.50px;top:445.55px;width:1.00px;height:10.65px;background:#eeeeee"></div>
<div class="b" style="left:768.50px;top:445.55px;width:1.00px;height:10.65px;background:#eeeeee"></div>
<div class="b" style="left:839.00px;top:445.55px;width:1.00px;height:10.65px;background:#eeeeee"></div>
<div class="b" style="left:904.50px;top:445.55px;width:1.00px;height:10.65px;background:#eeeeee"></div>
<div class="t" style="left:276.20px;top:446.86px;font-size:8.12px;line-height:9.74px;color:#3a3a3a;font-weight:normal;-webkit-text-stroke-width:0;transform:scaleY(1.1);transform-origin:0 80%">СИ1000.002.000 Столешница верхняя</div>
<div class="t" style="left:590.00px;top:446.86px;font-size:8.12px;line-height:9.74px;color:#3a3a3a;font-weight:normal;-webkit-text-stroke-width:0;transform:scaleY(1.1);transform-origin:0 80%">шт</div>
<div class="t" style="right:586.20px;top:446.98px;font-size:8px;line-height:9.60px;color:#3a3a3a;font-weight:normal;text-align:right;-webkit-text-stroke-width:0;transform:scaleY(1.1);transform-origin:100% 80%">200,000</div>
<div class="t" style="right:514.20px;top:446.98px;font-size:8px;line-height:9.60px;color:#3a3a3a;font-weight:normal;text-align:right;-webkit-text-stroke-width:0;transform:scaleY(1.1);transform-origin:100% 80%">200,000</div>
<div class="b" style="left:212.50px;top:466.85px;width:692.30px;height:1.00px;background:#eeeeee"></div>
<div class="b" style="left:262.00px;top:456.20px;width:1.00px;height:10.65px;background:#eeeeee"></div>
<div class="b" style="left:490.00px;top:456.20px;width:1.00px;height:10.65px;background:#eeeeee"></div>
<div class="b" style="left:587.00px;top:456.20px;width:1.00px;height:10.65px;background:#eeeeee"></div>
<div class="b" style="left:620.50px;top:456.20px;width:1.00px;height:10.65px;background:#eeeeee"></div>
<div class="b" style="left:695.50px;top:456.20px;width:1.00px;height:10.65px;background:#eeeeee"></div>
<div class="b" style="left:768.50px;top:456.20px;width:1.00px;height:10.65px;background:#eeeeee"></div>
<div class="b" style="left:839.00px;top:456.20px;width:1.00px;height:10.65px;background:#eeeeee"></div>
<div class="b" style="left:904.50px;top:456.20px;width:1.00px;height:10.65px;background:#eeeeee"></div>
<div class="t" style="left:276.20px;top:457.51px;font-size:8.12px;line-height:9.74px;color:#3a3a3a;font-weight:normal;-webkit-text-stroke-width:0;transform:scaleY(1.1);transform-origin:0 80%">СИ1000.003.000 Столешница нижняя</div>
<div class="t" style="left:590.00px;top:457.51px;font-size:8.12px;line-height:9.74px;color:#3a3a3a;font-weight:normal;-webkit-text-stroke-width:0;transform:scaleY(1.1);transform-origin:0 80%">шт</div>
<div class="t" style="right:586.20px;top:457.63px;font-size:8px;line-height:9.60px;color:#3a3a3a;font-weight:normal;text-align:right;-webkit-text-stroke-width:0;transform:scaleY(1.1);transform-origin:100% 80%">200,000</div>
<div class="t" style="right:514.20px;top:457.63px;font-size:8px;line-height:9.60px;color:#3a3a3a;font-weight:normal;text-align:right;-webkit-text-stroke-width:0;transform:scaleY(1.1);transform-origin:100% 80%">200,000</div>
<div class="b" style="left:212.50px;top:477.50px;width:692.30px;height:1.00px;background:#eeeeee"></div>
<div class="b" style="left:262.00px;top:466.85px;width:1.00px;height:10.65px;background:#eeeeee"></div>
<div class="b" style="left:490.00px;top:466.85px;width:1.00px;height:10.65px;background:#eeeeee"></div>
<div class="b" style="left:587.00px;top:466.85px;width:1.00px;height:10.65px;background:#eeeeee"></div>
<div class="b" style="left:620.50px;top:466.85px;width:1.00px;height:10.65px;background:#eeeeee"></div>
<div class="b" style="left:695.50px;top:466.85px;width:1.00px;height:10.65px;background:#eeeeee"></div>
<div class="b" style="left:768.50px;top:466.85px;width:1.00px;height:10.65px;background:#eeeeee"></div>
<div class="b" style="left:839.00px;top:466.85px;width:1.00px;height:10.65px;background:#eeeeee"></div>
<div class="b" style="left:904.50px;top:466.85px;width:1.00px;height:10.65px;background:#eeeeee"></div>
<div class="t" style="left:276.20px;top:468.16px;font-size:8.12px;line-height:9.74px;color:#3a3a3a;font-weight:normal;-webkit-text-stroke-width:0;transform:scaleY(1.1);transform-origin:0 80%">ТМ500.001.001 Стойка</div>
<div class="t" style="left:590.00px;top:468.16px;font-size:8.12px;line-height:9.74px;color:#3a3a3a;font-weight:normal;-webkit-text-stroke-width:0;transform:scaleY(1.1);transform-origin:0 80%">шт</div>
<div class="t" style="right:586.20px;top:468.28px;font-size:8px;line-height:9.60px;color:#3a3a3a;font-weight:normal;text-align:right;-webkit-text-stroke-width:0;transform:scaleY(1.1);transform-origin:100% 80%">720,000</div>
<div class="t" style="right:514.20px;top:468.28px;font-size:8px;line-height:9.60px;color:#3a3a3a;font-weight:normal;text-align:right;-webkit-text-stroke-width:0;transform:scaleY(1.1);transform-origin:100% 80%">720,000</div>
<div class="b" style="left:212.50px;top:488.15px;width:692.30px;height:1.00px;background:#eeeeee"></div>
<div class="b" style="left:262.00px;top:477.50px;width:1.00px;height:10.65px;background:#eeeeee"></div>
<div class="b" style="left:490.00px;top:477.50px;width:1.00px;height:10.65px;background:#eeeeee"></div>
<div class="b" style="left:587.00px;top:477.50px;width:1.00px;height:10.65px;background:#eeeeee"></div>
<div class="b" style="left:620.50px;top:477.50px;width:1.00px;height:10.65px;background:#eeeeee"></div>
<div class="b" style="left:695.50px;top:477.50px;width:1.00px;height:10.65px;background:#eeeeee"></div>
<div class="b" style="left:768.50px;top:477.50px;width:1.00px;height:10.65px;background:#eeeeee"></div>
<div class="b" style="left:839.00px;top:477.50px;width:1.00px;height:10.65px;background:#eeeeee"></div>
<div class="b" style="left:904.50px;top:477.50px;width:1.00px;height:10.65px;background:#eeeeee"></div>
<div class="t" style="left:276.20px;top:478.81px;font-size:8.12px;line-height:9.74px;color:#3a3a3a;font-weight:normal;-webkit-text-stroke-width:0;transform:scaleY(1.1);transform-origin:0 80%">ТМ500.001.002 Ребро</div>
<div class="t" style="left:590.00px;top:478.81px;font-size:8.12px;line-height:9.74px;color:#3a3a3a;font-weight:normal;-webkit-text-stroke-width:0;transform:scaleY(1.1);transform-origin:0 80%">шт</div>
<div class="t" style="right:586.20px;top:478.93px;font-size:8px;line-height:9.60px;color:#3a3a3a;font-weight:normal;text-align:right;-webkit-text-stroke-width:0;transform:scaleY(1.1);transform-origin:100% 80%">720,000</div>
<div class="t" style="right:514.20px;top:478.93px;font-size:8px;line-height:9.60px;color:#3a3a3a;font-weight:normal;text-align:right;-webkit-text-stroke-width:0;transform:scaleY(1.1);transform-origin:100% 80%">720,000</div>
<div class="b" style="left:212.50px;top:498.80px;width:692.30px;height:1.00px;background:#eeeeee"></div>
<div class="b" style="left:262.00px;top:488.15px;width:1.00px;height:10.65px;background:#eeeeee"></div>
<div class="b" style="left:490.00px;top:488.15px;width:1.00px;height:10.65px;background:#eeeeee"></div>
<div class="b" style="left:587.00px;top:488.15px;width:1.00px;height:10.65px;background:#eeeeee"></div>
<div class="b" style="left:620.50px;top:488.15px;width:1.00px;height:10.65px;background:#eeeeee"></div>
<div class="b" style="left:695.50px;top:488.15px;width:1.00px;height:10.65px;background:#eeeeee"></div>
<div class="b" style="left:768.50px;top:488.15px;width:1.00px;height:10.65px;background:#eeeeee"></div>
<div class="b" style="left:839.00px;top:488.15px;width:1.00px;height:10.65px;background:#eeeeee"></div>
<div class="b" style="left:904.50px;top:488.15px;width:1.00px;height:10.65px;background:#eeeeee"></div>
<div class="t" style="left:276.20px;top:489.46px;font-size:8.12px;line-height:9.74px;color:#3a3a3a;font-weight:normal;-webkit-text-stroke-width:0;transform:scaleY(1.1);transform-origin:0 80%">ТМ500.002.000 Столешница</div>
<div class="t" style="left:590.00px;top:489.46px;font-size:8.12px;line-height:9.74px;color:#3a3a3a;font-weight:normal;-webkit-text-stroke-width:0;transform:scaleY(1.1);transform-origin:0 80%">шт</div>
<div class="t" style="right:586.20px;top:489.58px;font-size:8px;line-height:9.60px;color:#3a3a3a;font-weight:normal;text-align:right;-webkit-text-stroke-width:0;transform:scaleY(1.1);transform-origin:100% 80%">180,000</div>
<div class="t" style="right:514.20px;top:489.58px;font-size:8px;line-height:9.60px;color:#3a3a3a;font-weight:normal;text-align:right;-webkit-text-stroke-width:0;transform:scaleY(1.1);transform-origin:100% 80%">180,000</div>
<div class="b" style="left:212.50px;top:509.45px;width:692.30px;height:1.00px;background:#eeeeee"></div>
<div class="b" style="left:262.00px;top:498.80px;width:1.00px;height:10.65px;background:#eeeeee"></div>
<div class="b" style="left:490.00px;top:498.80px;width:1.00px;height:10.65px;background:#eeeeee"></div>
<div class="b" style="left:587.00px;top:498.80px;width:1.00px;height:10.65px;background:#eeeeee"></div>
<div class="b" style="left:620.50px;top:498.80px;width:1.00px;height:10.65px;background:#eeeeee"></div>
<div class="b" style="left:695.50px;top:498.80px;width:1.00px;height:10.65px;background:#eeeeee"></div>
<div class="b" style="left:768.50px;top:498.80px;width:1.00px;height:10.65px;background:#eeeeee"></div>
<div class="b" style="left:839.00px;top:498.80px;width:1.00px;height:10.65px;background:#eeeeee"></div>
<div class="b" style="left:904.50px;top:498.80px;width:1.00px;height:10.65px;background:#eeeeee"></div>
<div class="t" style="left:276.20px;top:500.11px;font-size:8.12px;line-height:9.74px;color:#3a3a3a;font-weight:normal;-webkit-text-stroke-width:0;transform:scaleY(1.1);transform-origin:0 80%">ТМ500.003.000 Дно</div>
<div class="t" style="left:590.00px;top:500.11px;font-size:8.12px;line-height:9.74px;color:#3a3a3a;font-weight:normal;-webkit-text-stroke-width:0;transform:scaleY(1.1);transform-origin:0 80%">шт</div>
<div class="t" style="right:586.20px;top:500.23px;font-size:8px;line-height:9.60px;color:#3a3a3a;font-weight:normal;text-align:right;-webkit-text-stroke-width:0;transform:scaleY(1.1);transform-origin:100% 80%">180,000</div>
<div class="t" style="right:514.20px;top:500.23px;font-size:8px;line-height:9.60px;color:#3a3a3a;font-weight:normal;text-align:right;-webkit-text-stroke-width:0;transform:scaleY(1.1);transform-origin:100% 80%">180,000</div>
<div class="b" style="left:212.50px;top:520.10px;width:692.30px;height:1.00px;background:#eeeeee"></div>
<div class="b" style="left:262.00px;top:509.45px;width:1.00px;height:10.65px;background:#eeeeee"></div>
<div class="b" style="left:490.00px;top:509.45px;width:1.00px;height:10.65px;background:#eeeeee"></div>
<div class="b" style="left:587.00px;top:509.45px;width:1.00px;height:10.65px;background:#eeeeee"></div>
<div class="b" style="left:620.50px;top:509.45px;width:1.00px;height:10.65px;background:#eeeeee"></div>
<div class="b" style="left:695.50px;top:509.45px;width:1.00px;height:10.65px;background:#eeeeee"></div>
<div class="b" style="left:768.50px;top:509.45px;width:1.00px;height:10.65px;background:#eeeeee"></div>
<div class="b" style="left:839.00px;top:509.45px;width:1.00px;height:10.65px;background:#eeeeee"></div>
<div class="b" style="left:904.50px;top:509.45px;width:1.00px;height:10.65px;background:#eeeeee"></div>
<div class="t" style="left:276.20px;top:510.76px;font-size:8.12px;line-height:9.74px;color:#3a3a3a;font-weight:normal;-webkit-text-stroke-width:0;transform:scaleY(1.1);transform-origin:0 80%">ТМ500.004.000 Полка</div>
<div class="t" style="left:590.00px;top:510.76px;font-size:8.12px;line-height:9.74px;color:#3a3a3a;font-weight:normal;-webkit-text-stroke-width:0;transform:scaleY(1.1);transform-origin:0 80%">шт</div>
<div class="t" style="right:586.20px;top:510.88px;font-size:8px;line-height:9.60px;color:#3a3a3a;font-weight:normal;text-align:right;-webkit-text-stroke-width:0;transform:scaleY(1.1);transform-origin:100% 80%">180,000</div>
<div class="t" style="right:514.20px;top:510.88px;font-size:8px;line-height:9.60px;color:#3a3a3a;font-weight:normal;text-align:right;-webkit-text-stroke-width:0;transform:scaleY(1.1);transform-origin:100% 80%">180,000</div>
<div class="b" style="left:212.50px;top:530.75px;width:692.30px;height:1.00px;background:#eeeeee"></div>
<div class="b" style="left:262.00px;top:520.10px;width:1.00px;height:10.65px;background:#eeeeee"></div>
<div class="b" style="left:490.00px;top:520.10px;width:1.00px;height:10.65px;background:#eeeeee"></div>
<div class="b" style="left:587.00px;top:520.10px;width:1.00px;height:10.65px;background:#eeeeee"></div>
<div class="b" style="left:620.50px;top:520.10px;width:1.00px;height:10.65px;background:#eeeeee"></div>
<div class="b" style="left:695.50px;top:520.10px;width:1.00px;height:10.65px;background:#eeeeee"></div>
<div class="b" style="left:768.50px;top:520.10px;width:1.00px;height:10.65px;background:#eeeeee"></div>
<div class="b" style="left:839.00px;top:520.10px;width:1.00px;height:10.65px;background:#eeeeee"></div>
<div class="b" style="left:904.50px;top:520.10px;width:1.00px;height:10.65px;background:#eeeeee"></div>
<div class="t" style="left:276.20px;top:521.41px;font-size:8.12px;line-height:9.74px;color:#3a3a3a;font-weight:normal;-webkit-text-stroke-width:0;transform:scaleY(1.1);transform-origin:0 80%">ТМ500.005.000 Стенка</div>
<div class="t" style="left:590.00px;top:521.41px;font-size:8.12px;line-height:9.74px;color:#3a3a3a;font-weight:normal;-webkit-text-stroke-width:0;transform:scaleY(1.1);transform-origin:0 80%">шт</div>
<div class="t" style="right:586.20px;top:521.53px;font-size:8px;line-height:9.60px;color:#3a3a3a;font-weight:normal;text-align:right;-webkit-text-stroke-width:0;transform:scaleY(1.1);transform-origin:100% 80%">180,000</div>
<div class="t" style="right:514.20px;top:521.53px;font-size:8px;line-height:9.60px;color:#3a3a3a;font-weight:normal;text-align:right;-webkit-text-stroke-width:0;transform:scaleY(1.1);transform-origin:100% 80%">180,000</div>
<div class="b" style="left:212.50px;top:541.40px;width:692.30px;height:1.00px;background:#eeeeee"></div>
<div class="b" style="left:262.00px;top:530.75px;width:1.00px;height:10.65px;background:#eeeeee"></div>
<div class="b" style="left:490.00px;top:530.75px;width:1.00px;height:10.65px;background:#eeeeee"></div>
<div class="b" style="left:587.00px;top:530.75px;width:1.00px;height:10.65px;background:#eeeeee"></div>
<div class="b" style="left:620.50px;top:530.75px;width:1.00px;height:10.65px;background:#eeeeee"></div>
<div class="b" style="left:695.50px;top:530.75px;width:1.00px;height:10.65px;background:#eeeeee"></div>
<div class="b" style="left:768.50px;top:530.75px;width:1.00px;height:10.65px;background:#eeeeee"></div>
<div class="b" style="left:839.00px;top:530.75px;width:1.00px;height:10.65px;background:#eeeeee"></div>
<div class="b" style="left:904.50px;top:530.75px;width:1.00px;height:10.65px;background:#eeeeee"></div>
<div class="t" style="left:276.20px;top:532.06px;font-size:8.12px;line-height:9.74px;color:#3a3a3a;font-weight:normal;-webkit-text-stroke-width:0;transform:scaleY(1.1);transform-origin:0 80%">ТМ500.006.000 Ребро</div>
<div class="t" style="left:590.00px;top:532.06px;font-size:8.12px;line-height:9.74px;color:#3a3a3a;font-weight:normal;-webkit-text-stroke-width:0;transform:scaleY(1.1);transform-origin:0 80%">шт</div>
<div class="t" style="right:586.20px;top:532.18px;font-size:8px;line-height:9.60px;color:#3a3a3a;font-weight:normal;text-align:right;-webkit-text-stroke-width:0;transform:scaleY(1.1);transform-origin:100% 80%">540,000</div>
<div class="t" style="right:514.20px;top:532.18px;font-size:8px;line-height:9.60px;color:#3a3a3a;font-weight:normal;text-align:right;-webkit-text-stroke-width:0;transform:scaleY(1.1);transform-origin:100% 80%">540,000</div>
<div class="b" style="left:212.50px;top:552.05px;width:692.30px;height:1.00px;background:#eeeeee"></div>
<div class="b" style="left:262.00px;top:541.40px;width:1.00px;height:10.65px;background:#eeeeee"></div>
<div class="b" style="left:490.00px;top:541.40px;width:1.00px;height:10.65px;background:#eeeeee"></div>
<div class="b" style="left:587.00px;top:541.40px;width:1.00px;height:10.65px;background:#eeeeee"></div>
<div class="b" style="left:620.50px;top:541.40px;width:1.00px;height:10.65px;background:#eeeeee"></div>
<div class="b" style="left:695.50px;top:541.40px;width:1.00px;height:10.65px;background:#eeeeee"></div>
<div class="b" style="left:768.50px;top:541.40px;width:1.00px;height:10.65px;background:#eeeeee"></div>
<div class="b" style="left:839.00px;top:541.40px;width:1.00px;height:10.65px;background:#eeeeee"></div>
<div class="b" style="left:904.50px;top:541.40px;width:1.00px;height:10.65px;background:#eeeeee"></div>
<div class="t" style="left:276.20px;top:542.71px;font-size:8.12px;line-height:9.74px;color:#3a3a3a;font-weight:normal;-webkit-text-stroke-width:0;transform:scaleY(1.1);transform-origin:0 80%">У.001.001 Ребро</div>
<div class="t" style="left:590.00px;top:542.71px;font-size:8.12px;line-height:9.74px;color:#3a3a3a;font-weight:normal;-webkit-text-stroke-width:0;transform:scaleY(1.1);transform-origin:0 80%">шт</div>
<div class="t" style="right:586.20px;top:542.83px;font-size:8px;line-height:9.60px;color:#3a3a3a;font-weight:normal;text-align:right;-webkit-text-stroke-width:0;transform:scaleY(1.1);transform-origin:100% 80%">720,000</div>
<div class="t" style="right:514.20px;top:542.83px;font-size:8px;line-height:9.60px;color:#3a3a3a;font-weight:normal;text-align:right;-webkit-text-stroke-width:0;transform:scaleY(1.1);transform-origin:100% 80%">720,000</div>
<div class="b" style="left:212.50px;top:562.70px;width:692.30px;height:1.00px;background:#eeeeee"></div>
<div class="b" style="left:262.00px;top:552.05px;width:1.00px;height:10.65px;background:#eeeeee"></div>
<div class="b" style="left:490.00px;top:552.05px;width:1.00px;height:10.65px;background:#eeeeee"></div>
<div class="b" style="left:587.00px;top:552.05px;width:1.00px;height:10.65px;background:#eeeeee"></div>
<div class="b" style="left:620.50px;top:552.05px;width:1.00px;height:10.65px;background:#eeeeee"></div>
<div class="b" style="left:695.50px;top:552.05px;width:1.00px;height:10.65px;background:#eeeeee"></div>
<div class="b" style="left:768.50px;top:552.05px;width:1.00px;height:10.65px;background:#eeeeee"></div>
<div class="b" style="left:839.00px;top:552.05px;width:1.00px;height:10.65px;background:#eeeeee"></div>
<div class="b" style="left:904.50px;top:552.05px;width:1.00px;height:10.65px;background:#eeeeee"></div>
<div class="t" style="left:276.20px;top:553.36px;font-size:8.12px;line-height:9.74px;color:#3a3a3a;font-weight:normal;-webkit-text-stroke-width:0;transform:scaleY(1.1);transform-origin:0 80%">У.001.002 Стенка</div>
<div class="t" style="left:590.00px;top:553.36px;font-size:8.12px;line-height:9.74px;color:#3a3a3a;font-weight:normal;-webkit-text-stroke-width:0;transform:scaleY(1.1);transform-origin:0 80%">шт</div>
<div class="t" style="right:586.20px;top:553.48px;font-size:8px;line-height:9.60px;color:#3a3a3a;font-weight:normal;text-align:right;-webkit-text-stroke-width:0;transform:scaleY(1.1);transform-origin:100% 80%">360,000</div>
<div class="t" style="right:514.20px;top:553.48px;font-size:8px;line-height:9.60px;color:#3a3a3a;font-weight:normal;text-align:right;-webkit-text-stroke-width:0;transform:scaleY(1.1);transform-origin:100% 80%">360,000</div>
<div class="b" style="left:212.50px;top:573.35px;width:692.30px;height:1.00px;background:#eeeeee"></div>
<div class="b" style="left:262.00px;top:562.70px;width:1.00px;height:10.65px;background:#eeeeee"></div>
<div class="b" style="left:490.00px;top:562.70px;width:1.00px;height:10.65px;background:#eeeeee"></div>
<div class="b" style="left:587.00px;top:562.70px;width:1.00px;height:10.65px;background:#eeeeee"></div>
<div class="b" style="left:620.50px;top:562.70px;width:1.00px;height:10.65px;background:#eeeeee"></div>
<div class="b" style="left:695.50px;top:562.70px;width:1.00px;height:10.65px;background:#eeeeee"></div>
<div class="b" style="left:768.50px;top:562.70px;width:1.00px;height:10.65px;background:#eeeeee"></div>
<div class="b" style="left:839.00px;top:562.70px;width:1.00px;height:10.65px;background:#eeeeee"></div>
<div class="b" style="left:904.50px;top:562.70px;width:1.00px;height:10.65px;background:#eeeeee"></div>
<div class="t" style="left:276.20px;top:564.01px;font-size:8.12px;line-height:9.74px;color:#3a3a3a;font-weight:normal;-webkit-text-stroke-width:0;transform:scaleY(1.1);transform-origin:0 80%">У.002.001 Опора</div>
<div class="t" style="left:590.00px;top:564.01px;font-size:8.12px;line-height:9.74px;color:#3a3a3a;font-weight:normal;-webkit-text-stroke-width:0;transform:scaleY(1.1);transform-origin:0 80%">шт</div>
<div class="t" style="right:586.20px;top:564.13px;font-size:8px;line-height:9.60px;color:#3a3a3a;font-weight:normal;text-align:right;-webkit-text-stroke-width:0;transform:scaleY(1.1);transform-origin:100% 80%">2 320,000</div>
<div class="t" style="right:514.20px;top:564.13px;font-size:8px;line-height:9.60px;color:#3a3a3a;font-weight:normal;text-align:right;-webkit-text-stroke-width:0;transform:scaleY(1.1);transform-origin:100% 80%">2 320,000</div>
<div class="b" style="left:212.50px;top:584.00px;width:692.30px;height:1.00px;background:#eeeeee"></div>
<div class="b" style="left:262.00px;top:573.35px;width:1.00px;height:10.65px;background:#eeeeee"></div>
<div class="b" style="left:490.00px;top:573.35px;width:1.00px;height:10.65px;background:#eeeeee"></div>
<div class="b" style="left:587.00px;top:573.35px;width:1.00px;height:10.65px;background:#eeeeee"></div>
<div class="b" style="left:620.50px;top:573.35px;width:1.00px;height:10.65px;background:#eeeeee"></div>
<div class="b" style="left:695.50px;top:573.35px;width:1.00px;height:10.65px;background:#eeeeee"></div>
<div class="b" style="left:768.50px;top:573.35px;width:1.00px;height:10.65px;background:#eeeeee"></div>
<div class="b" style="left:839.00px;top:573.35px;width:1.00px;height:10.65px;background:#eeeeee"></div>
<div class="b" style="left:904.50px;top:573.35px;width:1.00px;height:10.65px;background:#eeeeee"></div>
<div class="t" style="left:276.20px;top:574.66px;font-size:8.12px;line-height:9.74px;color:#3a3a3a;font-weight:normal;-webkit-text-stroke-width:0;transform:scaleY(1.1);transform-origin:0 80%">У.002.002 Пятка</div>
<div class="t" style="left:590.00px;top:574.66px;font-size:8.12px;line-height:9.74px;color:#3a3a3a;font-weight:normal;-webkit-text-stroke-width:0;transform:scaleY(1.1);transform-origin:0 80%">шт</div>
<div class="t" style="right:586.20px;top:574.78px;font-size:8px;line-height:9.60px;color:#3a3a3a;font-weight:normal;text-align:right;-webkit-text-stroke-width:0;transform:scaleY(1.1);transform-origin:100% 80%">2 320,000</div>
<div class="t" style="right:514.20px;top:574.78px;font-size:8px;line-height:9.60px;color:#3a3a3a;font-weight:normal;text-align:right;-webkit-text-stroke-width:0;transform:scaleY(1.1);transform-origin:100% 80%">2 320,000</div>
<div class="b" style="left:212.50px;top:594.65px;width:692.30px;height:1.00px;background:#eeeeee"></div>
<div class="b" style="left:262.00px;top:584.00px;width:1.00px;height:10.65px;background:#eeeeee"></div>
<div class="b" style="left:490.00px;top:584.00px;width:1.00px;height:10.65px;background:#eeeeee"></div>
<div class="b" style="left:587.00px;top:584.00px;width:1.00px;height:10.65px;background:#eeeeee"></div>
<div class="b" style="left:620.50px;top:584.00px;width:1.00px;height:10.65px;background:#eeeeee"></div>
<div class="b" style="left:695.50px;top:584.00px;width:1.00px;height:10.65px;background:#eeeeee"></div>
<div class="b" style="left:768.50px;top:584.00px;width:1.00px;height:10.65px;background:#eeeeee"></div>
<div class="b" style="left:839.00px;top:584.00px;width:1.00px;height:10.65px;background:#eeeeee"></div>
<div class="b" style="left:904.50px;top:584.00px;width:1.00px;height:10.65px;background:#eeeeee"></div>
<div class="t" style="left:214.50px;top:585.31px;font-size:8.12px;line-height:9.74px;color:#3a3a3a;font-weight:normal;-webkit-text-stroke-width:0;transform:scaleY(1.1);transform-origin:0 80%">8800002</div>
<div class="t" style="left:276.20px;top:585.31px;font-size:8.12px;line-height:9.74px;color:#3a3a3a;font-weight:normal;-webkit-text-stroke-width:0;transform:scaleY(1.1);transform-origin:0 80%">Верстак ТМ500</div>
<div class="t" style="left:590.00px;top:585.31px;font-size:8.12px;line-height:9.74px;color:#3a3a3a;font-weight:normal;-webkit-text-stroke-width:0;transform:scaleY(1.1);transform-origin:0 80%">шт</div>
<div class="t" style="right:514.20px;top:585.43px;font-size:8px;line-height:9.60px;color:#3a3a3a;font-weight:normal;text-align:right;-webkit-text-stroke-width:0;transform:scaleY(1.1);transform-origin:100% 80%">180,000</div>
<div class="t" style="right:442.50px;top:585.43px;font-size:8px;line-height:9.60px;color:#3a3a3a;font-weight:normal;text-align:right;-webkit-text-stroke-width:0;transform:scaleY(1.1);transform-origin:100% 80%">100,00</div>
<div class="t" style="right:376.70px;top:585.43px;font-size:8px;line-height:9.60px;color:#3a3a3a;font-weight:normal;text-align:right;-webkit-text-stroke-width:0;transform:scaleY(1.1);transform-origin:100% 80%">180,00</div>
<div class="b" style="left:212.50px;top:605.30px;width:692.30px;height:1.00px;background:#eeeeee"></div>
<div class="b" style="left:262.00px;top:594.65px;width:1.00px;height:10.65px;background:#eeeeee"></div>
<div class="b" style="left:490.00px;top:594.65px;width:1.00px;height:10.65px;background:#eeeeee"></div>
<div class="b" style="left:587.00px;top:594.65px;width:1.00px;height:10.65px;background:#eeeeee"></div>
<div class="b" style="left:620.50px;top:594.65px;width:1.00px;height:10.65px;background:#eeeeee"></div>
<div class="b" style="left:695.50px;top:594.65px;width:1.00px;height:10.65px;background:#eeeeee"></div>
<div class="b" style="left:768.50px;top:594.65px;width:1.00px;height:10.65px;background:#eeeeee"></div>
<div class="b" style="left:839.00px;top:594.65px;width:1.00px;height:10.65px;background:#eeeeee"></div>
<div class="b" style="left:904.50px;top:594.65px;width:1.00px;height:10.65px;background:#eeeeee"></div>
<div class="t" style="left:214.50px;top:595.96px;font-size:8.12px;line-height:9.74px;color:#3a3a3a;font-weight:normal;-webkit-text-stroke-width:0;transform:scaleY(1.1);transform-origin:0 80%">8800003</div>
<div class="t" style="left:276.20px;top:595.96px;font-size:8.12px;line-height:9.74px;color:#3a3a3a;font-weight:normal;-webkit-text-stroke-width:0;transform:scaleY(1.1);transform-origin:0 80%">Стол инструментальный СИ1000</div>
<div class="t" style="left:590.00px;top:595.96px;font-size:8.12px;line-height:9.74px;color:#3a3a3a;font-weight:normal;-webkit-text-stroke-width:0;transform:scaleY(1.1);transform-origin:0 80%">шт</div>
<div class="t" style="right:514.20px;top:596.08px;font-size:8px;line-height:9.60px;color:#3a3a3a;font-weight:normal;text-align:right;-webkit-text-stroke-width:0;transform:scaleY(1.1);transform-origin:100% 80%">200,000</div>
<div class="t" style="right:442.50px;top:596.08px;font-size:8px;line-height:9.60px;color:#3a3a3a;font-weight:normal;text-align:right;-webkit-text-stroke-width:0;transform:scaleY(1.1);transform-origin:100% 80%">100,00</div>
<div class="t" style="right:376.70px;top:596.08px;font-size:8px;line-height:9.60px;color:#3a3a3a;font-weight:normal;text-align:right;-webkit-text-stroke-width:0;transform:scaleY(1.1);transform-origin:100% 80%">200,00</div>
<div class="b" style="left:194.00px;top:246.00px;width:7.00px;height:7.00px;border:1px solid #9a9a9a;background:#fff"></div>
<div class="b" style="left:196.00px;top:249.00px;width:3.00px;height:1.00px;background:#444"></div>
<div class="b" style="left:197.00px;top:253.00px;width:1.00px;height:352.30px;background:#999"></div>
<div class="b" style="left:197.00px;top:605.30px;width:15.50px;height:1.00px;background:#999"></div>
<div class="b" style="left:212.50px;top:619.20px;width:692.30px;height:1.00px;background:#eeeeee"></div>
<div class="b" style="left:620.50px;top:605.30px;width:1.00px;height:13.90px;background:#eeeeee"></div>
<div class="b" style="left:695.50px;top:605.30px;width:1.00px;height:13.90px;background:#eeeeee"></div>
<div class="b" style="left:768.50px;top:605.30px;width:1.00px;height:13.90px;background:#eeeeee"></div>
<div class="b" style="left:839.00px;top:605.30px;width:1.00px;height:13.90px;background:#eeeeee"></div>
<div class="b" style="left:904.50px;top:605.30px;width:1.00px;height:13.90px;background:#eeeeee"></div>
<div class="t" style="left:214.50px;top:606.28px;font-size:10.9px;line-height:13.08px;color:#3a3a3a;font-weight:normal;-webkit-text-stroke-width:0.08px">Итого</div>
<div class="t" style="right:586.20px;top:606.57px;font-size:10.6px;line-height:12.72px;color:#3a3a3a;font-weight:normal;text-align:right;-webkit-text-stroke-width:0.08px">67 375,000</div>
<div class="t" style="right:514.20px;top:606.57px;font-size:10.6px;line-height:12.72px;color:#3a3a3a;font-weight:normal;text-align:right;-webkit-text-stroke-width:0.08px">12 200,000</div>
<div class="t" style="right:442.50px;top:606.57px;font-size:10.6px;line-height:12.72px;color:#3a3a3a;font-weight:normal;text-align:right;-webkit-text-stroke-width:0.08px">-81,89</div>
<div class="t" style="right:376.70px;top:606.57px;font-size:10.6px;line-height:12.72px;color:#3a3a3a;font-weight:normal;text-align:right;-webkit-text-stroke-width:0.08px">-55 175,00</div>
<div class="b" style="left:1253.50px;top:165.40px;width:6.40px;height:478.60px;background:#9b9b9b;border-radius:3.2px"></div>
<svg class="b" style="left:1255.00px;top:154.00px;" width="4" height="4" viewBox="0 0 4 4"><path d="M0.3 3 L2 0.5 L3.7 3Z" fill="#b5b5b5"/></svg>
<svg class="b" style="left:1255.00px;top:652.50px;" width="4" height="4" viewBox="0 0 4 4"><path d="M0.3 0.8 L2 3.3 L3.7 0.8Z" fill="#444"/></svg>
<div class="b" style="left:211.00px;top:665.30px;width:1021.00px;height:6.40px;background:#dcdcdc;border-radius:3.2px"></div>
<div class="b" style="left:211.00px;top:665.30px;width:942.00px;height:6.40px;background:#9b9b9b;border-radius:3.2px"></div>
<svg class="b" style="left:200.00px;top:666.50px;" width="4" height="4" viewBox="0 0 4 4"><path d="M3.3 0.3 L0.8 2 L3.3 3.7Z" fill="#b5b5b5"/></svg>
<svg class="b" style="left:1240.50px;top:666.50px;" width="4" height="4" viewBox="0 0 4 4"><path d="M0.7 0.3 L3.2 2 L0.7 3.7Z" fill="#444"/></svg>
</body></html>
